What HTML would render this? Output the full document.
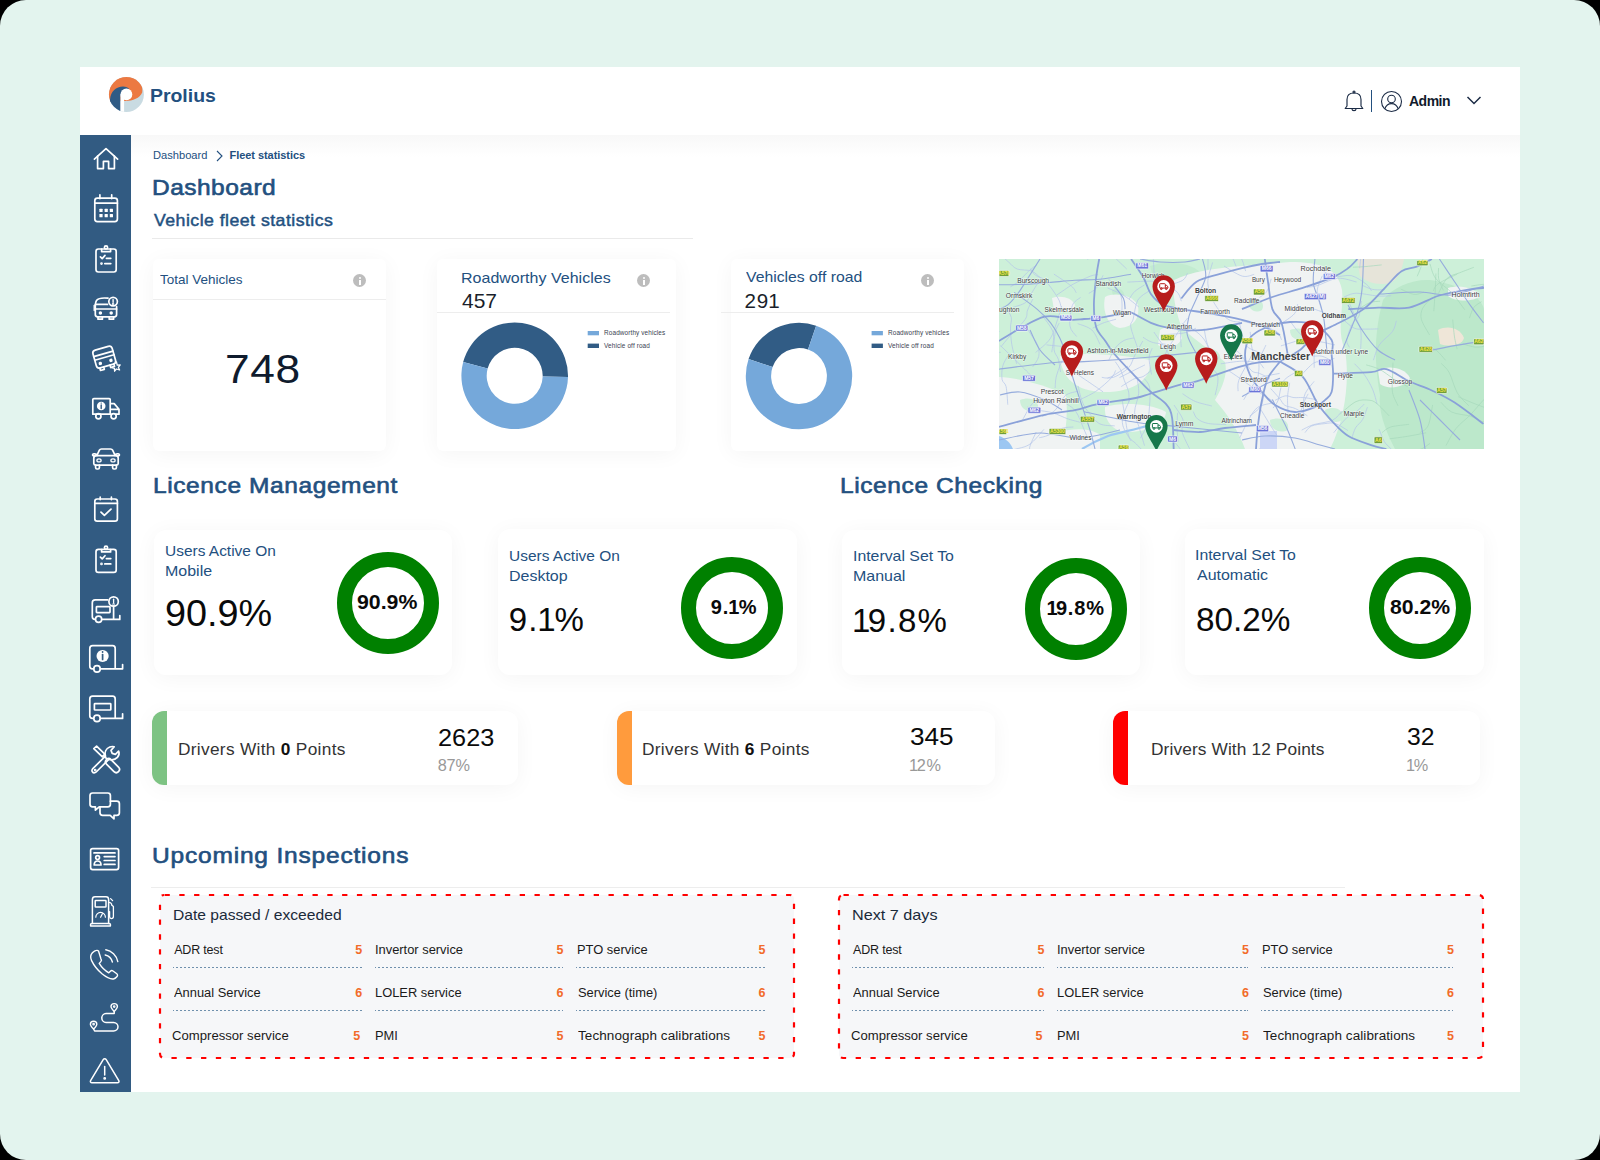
<!DOCTYPE html>
<html><head><meta charset="utf-8">
<style>
*{margin:0;padding:0;box-sizing:border-box}
html,body{width:1600px;height:1160px;overflow:hidden;background:#000;font-family:"Liberation Sans",sans-serif}
.bg{position:absolute;left:0;top:0;width:1600px;height:1160px;background:#E3F4EE;border-radius:26px}
.abs{position:absolute}
.panel{position:absolute;left:80px;top:67px;width:1440px;height:1025px;background:#fff}
.header{position:absolute;left:80px;top:67px;width:1440px;height:68px;background:#fff}
.shade{position:absolute;left:131px;top:135px;width:1389px;height:22px;background:linear-gradient(#f8f8f8,#fff)}
.sidebar{position:absolute;left:80px;top:135px;width:51px;height:957px;background:#325B82}
.t{position:absolute;white-space:nowrap;line-height:1}
.card{position:absolute;background:#fff;border-radius:10px;box-shadow:0 3px 22px rgba(0,0,0,0.045)}
.ttl{color:#23507F;font-weight:bold}
.info{position:absolute;width:13px;height:13px;border-radius:50%;background:#BDBDBD}
.info:before{content:"";position:absolute;left:5.5px;top:2.5px;width:2px;height:2px;background:#fff;border-radius:1px}
.info:after{content:"";position:absolute;left:5.5px;top:5.5px;width:2px;height:5px;background:#fff}
.lt{font-size:14px;line-height:20px;color:#23507F}
.lv{font-size:34px;color:#0A0A0A}
.ring{position:absolute;width:102px;height:102px;margin:0.5px 0 0 0.5px;border-radius:50%;border:15px solid #008000;display:flex;align-items:center;justify-content:center}
.ring span{font-size:18px;font-weight:bold;color:#0A0A0A;line-height:1}
.drv{border-radius:12px;overflow:hidden}
.drv i{position:absolute;left:0;top:0;width:15px;height:100%}
.dt{font-size:16px;color:#333}
.dt b{color:#111}
.dn{font-size:23px;color:#0A0A0A}
.dp{font-size:15px;color:#999}
.ibox{position:absolute;background:#F5F7FA;border:2px dashed #F21D1D}
.ih{font-size:15px;color:#1B2A3A}
.it{font-size:13px;color:#1A1A1A}
.inum{font-size:13px;color:#F0712B;font-weight:bold}
.dot{position:absolute;height:1.1px;background:repeating-linear-gradient(90deg,#6F90AD 0 2px,transparent 2px 4px);background-position:-1px 0}
</style></head><body>
<div class="bg"></div>
<div class="panel"></div>
<div class="header"></div>
<div class="shade"></div>
<div class="sidebar"></div>

<!-- logo -->
<svg class="abs" style="left:105px;top:74px" width="43" height="41" viewBox="105 74 43 41">
<defs><clipPath id="lc"><circle cx="126.4" cy="94.5" r="17.5"/></clipPath></defs>
<g clip-path="url(#lc)">
<rect x="105" y="74" width="43" height="41" fill="#C9DBE2"/>
<path d="M124 101 C132 101.4 139.6 98.6 142.2 92.6 C142.4 91 142.4 89 142 87 C140 80 133.5 76.5 126.4 76.5 C116 76.5 108.6 84 108.6 94.5 L109.5 101.5 Z" fill="#EC7942"/>
<path d="M110.1 99 C110.6 91.6 116.2 86.4 123 86.4 C125.4 86.4 127.4 87.2 129 88.6 L120.5 96 V112.5 L108 112.5 Z" fill="#2F5B85"/>
<circle cx="126.4" cy="94.4" r="5.9" fill="#fff"/>
<rect x="120.5" y="94.4" width="3.6" height="19" fill="#fff"/>
</g>
</svg>
<!-- breadcrumb -->
<svg class="abs" style="left:215px;top:150px" width="9" height="12" viewBox="0 0 9 12" fill="none" stroke="#23507F" stroke-width="1.1"><path d="M2 1 L7 6 L2 11"/></svg>
<div class="abs" style="left:152px;top:237.6px;width:541px;height:1.4px;background:#EAEAEA"></div>
<!-- header right -->
<svg class="abs" style="left:1343px;top:89px" width="22" height="24" viewBox="0 0 22 24" fill="none" stroke="#1B2B45" stroke-width="1.15">
  <path d="M4 17 V10.5 C4 6.5 6.8 4 11 4 C15.2 4 18 6.5 18 10.5 V17 L19.8 19.5 H2.2 Z" stroke-linejoin="round"/>
  <path d="M9 20 C9 22.2 13 22.2 13 20"/>
  <circle cx="11" cy="3" r="1"/>
</svg>
<div class="abs" style="left:1370.8px;top:90px;width:1.2px;height:22px;background:#23507F"></div>
<svg class="abs" style="left:1380px;top:90px" width="23" height="23" viewBox="0 0 23 23" fill="none" stroke="#1B2B45" stroke-width="1.1">
  <circle cx="11.5" cy="11.5" r="10"/>
  <circle cx="11.5" cy="9" r="3.8"/>
  <path d="M4.8 18.8 C6 15.2 8.5 13.6 11.5 13.6 C14.5 13.6 17 15.2 18.2 18.8"/>
</svg>
<svg class="abs" style="left:1466px;top:95px" width="16" height="11" viewBox="0 0 16 11" fill="none" stroke="#1B2B45" stroke-width="1.5">
  <path d="M1.5 2 L8 8.5 L14.5 2"/>
</svg>

<!-- cards row -->
<div class="card" style="left:153px;top:259px;width:233px;height:192px;border-radius:6px"></div>
<div class="abs" style="left:153px;top:299px;width:233px;height:1px;background:#EDEDED"></div>
<div class="info" style="left:353px;top:274px"></div>

<div class="card" style="left:437px;top:259px;width:239px;height:192px;border-radius:6px"></div>
<div class="abs" style="left:437px;top:312px;width:233px;height:1px;background:#EDEDED"></div>
<div class="info" style="left:637px;top:274px"></div>

<div class="card" style="left:731px;top:259px;width:233px;height:192px;border-radius:6px"></div>
<div class="abs" style="left:721px;top:312px;width:233px;height:1px;background:#EDEDED"></div>
<div class="info" style="left:921px;top:274px"></div>

<!-- section titles -->

<!-- licence cards -->
<div class="card" style="left:154px;top:530px;width:298px;height:145px;border-radius:12px"></div>
<div class="ring" style="left:336px;top:551px"></div>

<div class="card" style="left:498px;top:529px;width:299px;height:146px;border-radius:12px"></div>
<div class="ring" style="left:680px;top:556px"></div>

<div class="card" style="left:842px;top:530px;width:298px;height:145px;border-radius:12px"></div>
<div class="ring" style="left:1024px;top:557px"></div>

<div class="card" style="left:1185px;top:529px;width:299px;height:146px;border-radius:12px"></div>
<div class="ring" style="left:1368px;top:556px"></div>

<!-- drivers -->
<div class="card drv" style="left:152px;top:711px;width:366px;height:74px"><i style="background:#7DC383"></i></div>

<div class="card drv" style="left:617px;top:711px;width:378px;height:74px"><i style="background:#FF9B3D"></i></div>

<div class="card drv" style="left:1113px;top:711px;width:367px;height:74px"><i style="background:#FF0000"></i></div>

<!-- inspections -->
<div class="abs" style="left:151px;top:887px;width:1194px;height:1px;background:#EDEDED"></div>
<svg class="abs" style="left:156px;top:891px" width="641" height="170" viewBox="156 891 641 170"><rect x="160" y="895" width="634" height="163" rx="4" fill="#F6F7F9" stroke="#FF0000" stroke-width="2.2" stroke-dasharray="5.3 9.5" stroke-dashoffset="-0.5"/></svg>
<div class="dot" style="left:173px;top:967px;width:189px"></div>
<div class="dot" style="left:375px;top:967px;width:188px"></div>
<div class="dot" style="left:576px;top:967px;width:189px"></div>
<div class="dot" style="left:173px;top:1010px;width:189px"></div>
<div class="dot" style="left:375px;top:1010px;width:188px"></div>
<div class="dot" style="left:576px;top:1010px;width:189px"></div>
<svg class="abs" style="left:835px;top:891px" width="651" height="170" viewBox="835 891 651 170"><rect x="839" y="895" width="644" height="163" rx="4" fill="#F6F7F9" stroke="#FF0000" stroke-width="2.2" stroke-dasharray="5.3 9.5" stroke-dashoffset="-0.5"/></svg>
<div class="dot" style="left:852px;top:967px;width:192px"></div>
<div class="dot" style="left:1057px;top:967px;width:191px"></div>
<div class="dot" style="left:1261px;top:967px;width:192px"></div>
<div class="dot" style="left:852px;top:1010px;width:192px"></div>
<div class="dot" style="left:1057px;top:1010px;width:191px"></div>
<div class="dot" style="left:1261px;top:1010px;width:192px"></div>
<div class="t" style="left:150.2px;top:86.0px;font-size:19px;letter-spacing:-0.00px;color:#23507F;transform:scaleX(1.022);transform-origin:0 0;font-weight:bold">Prolius</div>
<div class="t" style="left:152.8px;top:149.8px;font-size:11px;letter-spacing:0.00px;color:#23507F;transform:scaleX(1.012);transform-origin:0 0">Dashboard</div>
<div class="t" style="left:229.6px;top:149.8px;font-size:11px;letter-spacing:-0.06px;color:#23507F;font-weight:bold">Fleet statistics</div>
<div class="t" style="left:152.4px;top:175.5px;font-size:22.7px;letter-spacing:0.44px;color:#23507F;transform:scaleX(1.080);transform-origin:0 0;-webkit-text-stroke:0.64px #23507F">Dashboard</div>
<div class="t" style="left:153.5px;top:212.1px;font-size:16.4px;letter-spacing:0.43px;color:#23507F;transform:scaleX(1.080);transform-origin:0 0;-webkit-text-stroke:0.46px #23507F">Vehicle fleet statistics</div>
<div class="t" style="left:1409.0px;top:93.5px;font-size:14px;letter-spacing:-0.50px;color:#111A2C;font-weight:bold">Admin</div>
<div class="t" style="left:160.0px;top:272.9px;font-size:13px;letter-spacing:0.00px;color:#23507F;transform:scaleX(1.038);transform-origin:0 0">Total Vehicles</div>
<div class="t" style="left:224.6px;top:348.5px;font-size:41px;letter-spacing:0.62px;color:#0F1B2D;transform:scaleX(1.080);transform-origin:0 0">748</div>
<div class="t" style="left:460.7px;top:270.8px;font-size:14.8px;letter-spacing:0.02px;color:#23507F;transform:scaleX(1.080);transform-origin:0 0">Roadworthy Vehicles</div>
<div class="t" style="left:462.2px;top:290.6px;font-size:20.6px;letter-spacing:0.00px;color:#1A1F2B;transform:scaleX(1.018);transform-origin:0 0">457</div>
<div class="t" style="left:745.6px;top:270.2px;font-size:14.8px;letter-spacing:0.00px;color:#23507F;transform:scaleX(1.065);transform-origin:0 0">Vehicles off road</div>
<div class="t" style="left:744.6px;top:290.7px;font-size:20.6px;letter-spacing:0.82px;color:#1A1F2B">29<span style="margin-left:-0.99px;margin-right:-1.48px">1</span></div>
<div class="t" style="left:152.9px;top:474.2px;font-size:22.7px;letter-spacing:0.55px;color:#23507F;transform:scaleX(1.080);transform-origin:0 0;-webkit-text-stroke:0.64px #23507F">Licence Management</div>
<div class="t" style="left:840.2px;top:474.2px;font-size:22.7px;letter-spacing:0.55px;color:#23507F;transform:scaleX(1.080);transform-origin:0 0;-webkit-text-stroke:0.64px #23507F">Licence Checking</div>
<div class="t" style="left:165.3px;top:544.2px;font-size:14.8px;letter-spacing:0.00px;color:#23507F;transform:scaleX(1.045);transform-origin:0 0">Users Active On</div>
<div class="t" style="left:165.2px;top:564.1px;font-size:14.8px;letter-spacing:0.00px;color:#23507F;transform:scaleX(1.080);transform-origin:0 0">Mobile</div>
<div class="t" style="left:164.7px;top:595.4px;font-size:37.5px;letter-spacing:0.00px;color:#0A0A0A;transform:scaleX(1.008);transform-origin:0 0">90.9%</div>
<div class="t" style="left:509.3px;top:548.8px;font-size:14.8px;letter-spacing:0.00px;color:#23507F;transform:scaleX(1.045);transform-origin:0 0">Users Active On</div>
<div class="t" style="left:509.2px;top:568.9px;font-size:14.8px;letter-spacing:0.00px;color:#23507F;transform:scaleX(1.080);transform-origin:0 0">Desktop</div>
<div class="t" style="left:508.7px;top:602.9px;font-size:33px;letter-spacing:1.32px;color:#0A0A0A">9.<span style="margin-left:-1.58px;margin-right:-2.38px">1</span>%</div>
<div class="t" style="left:852.9px;top:549.1px;font-size:14.8px;letter-spacing:0.00px;color:#23507F;transform:scaleX(1.070);transform-origin:0 0">Interval Set To</div>
<div class="t" style="left:852.9px;top:569.1px;font-size:14.8px;letter-spacing:0.00px;color:#23507F;transform:scaleX(1.080);transform-origin:0 0">Manual</div>
<div class="t" style="left:852.0px;top:603.5px;font-size:33px;letter-spacing:1.32px;color:#0A0A0A"><span style="margin-right:-3.96px">1</span>9.8%</div>
<div class="t" style="left:1195.4px;top:547.7px;font-size:14.8px;letter-spacing:0.00px;color:#23507F;transform:scaleX(1.070);transform-origin:0 0">Interval Set To</div>
<div class="t" style="left:1196.5px;top:567.7px;font-size:14.8px;letter-spacing:0.00px;color:#23507F;transform:scaleX(1.080);transform-origin:0 0">Automatic</div>
<div class="t" style="left:1195.5px;top:602.8px;font-size:33px;letter-spacing:0.00px;color:#0A0A0A;transform:scaleX(1.009);transform-origin:0 0">80.2%</div>
<div class="t" style="left:357.3px;top:591.9px;font-size:20px;letter-spacing:0.00px;color:#0A0A0A;transform:scaleX(1.063);transform-origin:0 0;font-weight:bold">90.9%</div>
<div class="t" style="left:710.8px;top:597.0px;font-size:20px;letter-spacing:0.80px;color:#0A0A0A;font-weight:bold">9.<span style="margin-left:-0.96px;margin-right:-1.44px">1</span>%</div>
<div class="t" style="left:1046.4px;top:597.6px;font-size:20px;letter-spacing:0.80px;color:#0A0A0A;font-weight:bold"><span style="margin-right:-2.40px">1</span>9.8%</div>
<div class="t" style="left:1389.5px;top:597.0px;font-size:20px;letter-spacing:0.00px;color:#0A0A0A;transform:scaleX(1.059);transform-origin:0 0;font-weight:bold">80.2%</div>
<div class="t" style="left:438.2px;top:725.6px;font-size:24.5px;letter-spacing:0.00px;color:#0A0A0A;transform:scaleX(1.033);transform-origin:0 0">2623</div>
<div class="t" style="left:437.7px;top:757.2px;font-size:16.3px;letter-spacing:-0.15px;color:#999999">87%</div>
<div class="t" style="left:910.0px;top:725.2px;font-size:24.5px;letter-spacing:0.00px;color:#0A0A0A;transform:scaleX(1.066);transform-origin:0 0">345</div>
<div class="t" style="left:909.0px;top:757.2px;font-size:16.3px;letter-spacing:0.65px;color:#999999"><span style="margin-right:-1.96px">1</span>2%</div>
<div class="t" style="left:1407.2px;top:725.2px;font-size:24.5px;letter-spacing:0.00px;color:#0A0A0A;transform:scaleX(1.010);transform-origin:0 0">32</div>
<div class="t" style="left:1405.9px;top:757.2px;font-size:16.3px;letter-spacing:0.65px;color:#999999"><span style="margin-right:-1.96px">1</span>%</div>
<div class="t" style="left:152.0px;top:844.2px;font-size:22.7px;letter-spacing:0.75px;color:#23507F;transform:scaleX(1.080);transform-origin:0 0;-webkit-text-stroke:0.64px #23507F">Upcoming Inspections</div>
<div class="t" style="left:172.7px;top:907.3px;font-size:15px;letter-spacing:-0.00px;color:#1B2A3A;transform:scaleX(1.042);transform-origin:0 0">Date passed / exceeded</div>
<div class="t" style="left:851.6px;top:907.3px;font-size:15px;letter-spacing:0.00px;color:#1B2A3A;transform:scaleX(1.080);transform-origin:0 0">Next 7 days</div>
<div class="t" style="left:174.2px;top:943.5px;font-size:12.5px;letter-spacing:-0.19px;color:#1A1A1A">ADR test</div>
<div class="t" style="left:355.3px;top:943.5px;font-size:12.5px;letter-spacing:0.38px;color:#F26B2A;font-weight:bold">5</div>
<div class="t" style="left:374.9px;top:943.5px;font-size:12.5px;letter-spacing:0.00px;color:#1A1A1A;transform:scaleX(1.030);transform-origin:0 0">Invertor service</div>
<div class="t" style="left:556.5px;top:943.5px;font-size:12.5px;letter-spacing:0.38px;color:#F26B2A;font-weight:bold">5</div>
<div class="t" style="left:576.7px;top:943.5px;font-size:12.5px;letter-spacing:0.00px;color:#1A1A1A;transform:scaleX(1.030);transform-origin:0 0">PTO service</div>
<div class="t" style="left:758.4px;top:943.5px;font-size:12.5px;letter-spacing:0.38px;color:#F26B2A;font-weight:bold">5</div>
<div class="t" style="left:174.2px;top:986.5px;font-size:12.5px;letter-spacing:0.00px;color:#1A1A1A;transform:scaleX(1.030);transform-origin:0 0">Annual Service</div>
<div class="t" style="left:355.3px;top:986.5px;font-size:12.5px;letter-spacing:0.38px;color:#F26B2A;font-weight:bold">6</div>
<div class="t" style="left:374.9px;top:986.5px;font-size:12.5px;letter-spacing:0.00px;color:#1A1A1A;transform:scaleX(1.030);transform-origin:0 0">LOLER service</div>
<div class="t" style="left:556.5px;top:986.5px;font-size:12.5px;letter-spacing:0.38px;color:#F26B2A;font-weight:bold">6</div>
<div class="t" style="left:577.7px;top:986.5px;font-size:12.5px;letter-spacing:0.00px;color:#1A1A1A;transform:scaleX(1.030);transform-origin:0 0">Service (time)</div>
<div class="t" style="left:758.4px;top:986.5px;font-size:12.5px;letter-spacing:0.38px;color:#F26B2A;font-weight:bold">6</div>
<div class="t" style="left:172.2px;top:1029.5px;font-size:12.5px;letter-spacing:0.00px;color:#1A1A1A;transform:scaleX(1.050);transform-origin:0 0">Compressor service</div>
<div class="t" style="left:353.3px;top:1029.5px;font-size:12.5px;letter-spacing:0.38px;color:#F26B2A;font-weight:bold">5</div>
<div class="t" style="left:374.9px;top:1029.5px;font-size:12.5px;letter-spacing:0.00px;color:#1A1A1A;transform:scaleX(1.030);transform-origin:0 0">PMI</div>
<div class="t" style="left:556.5px;top:1029.5px;font-size:12.5px;letter-spacing:0.38px;color:#F26B2A;font-weight:bold">5</div>
<div class="t" style="left:577.7px;top:1029.5px;font-size:12.5px;letter-spacing:0.08px;color:#1A1A1A;transform:scaleX(1.080);transform-origin:0 0">Technograph calibrations</div>
<div class="t" style="left:758.4px;top:1029.5px;font-size:12.5px;letter-spacing:0.38px;color:#F26B2A;font-weight:bold">5</div>
<div class="t" style="left:853.1px;top:943.5px;font-size:12.5px;letter-spacing:-0.19px;color:#1A1A1A">ADR test</div>
<div class="t" style="left:1037.6px;top:943.5px;font-size:12.5px;letter-spacing:0.38px;color:#F26B2A;font-weight:bold">5</div>
<div class="t" style="left:1057.0px;top:943.5px;font-size:12.5px;letter-spacing:0.00px;color:#1A1A1A;transform:scaleX(1.030);transform-origin:0 0">Invertor service</div>
<div class="t" style="left:1242.0px;top:943.5px;font-size:12.5px;letter-spacing:0.38px;color:#F26B2A;font-weight:bold">5</div>
<div class="t" style="left:1261.8px;top:943.5px;font-size:12.5px;letter-spacing:0.00px;color:#1A1A1A;transform:scaleX(1.030);transform-origin:0 0">PTO service</div>
<div class="t" style="left:1446.9px;top:943.5px;font-size:12.5px;letter-spacing:0.38px;color:#F26B2A;font-weight:bold">5</div>
<div class="t" style="left:853.1px;top:986.5px;font-size:12.5px;letter-spacing:0.00px;color:#1A1A1A;transform:scaleX(1.030);transform-origin:0 0">Annual Service</div>
<div class="t" style="left:1037.6px;top:986.5px;font-size:12.5px;letter-spacing:0.38px;color:#F26B2A;font-weight:bold">6</div>
<div class="t" style="left:1057.0px;top:986.5px;font-size:12.5px;letter-spacing:0.00px;color:#1A1A1A;transform:scaleX(1.030);transform-origin:0 0">LOLER service</div>
<div class="t" style="left:1242.0px;top:986.5px;font-size:12.5px;letter-spacing:0.38px;color:#F26B2A;font-weight:bold">6</div>
<div class="t" style="left:1262.8px;top:986.5px;font-size:12.5px;letter-spacing:0.00px;color:#1A1A1A;transform:scaleX(1.030);transform-origin:0 0">Service (time)</div>
<div class="t" style="left:1446.9px;top:986.5px;font-size:12.5px;letter-spacing:0.38px;color:#F26B2A;font-weight:bold">6</div>
<div class="t" style="left:851.1px;top:1029.5px;font-size:12.5px;letter-spacing:0.00px;color:#1A1A1A;transform:scaleX(1.050);transform-origin:0 0">Compressor service</div>
<div class="t" style="left:1035.6px;top:1029.5px;font-size:12.5px;letter-spacing:0.38px;color:#F26B2A;font-weight:bold">5</div>
<div class="t" style="left:1057.0px;top:1029.5px;font-size:12.5px;letter-spacing:0.00px;color:#1A1A1A;transform:scaleX(1.030);transform-origin:0 0">PMI</div>
<div class="t" style="left:1242.0px;top:1029.5px;font-size:12.5px;letter-spacing:0.38px;color:#F26B2A;font-weight:bold">5</div>
<div class="t" style="left:1262.8px;top:1029.5px;font-size:12.5px;letter-spacing:0.08px;color:#1A1A1A;transform:scaleX(1.080);transform-origin:0 0">Technograph calibrations</div>
<div class="t" style="left:1446.9px;top:1029.5px;font-size:12.5px;letter-spacing:0.38px;color:#F26B2A;font-weight:bold">5</div>
<div class="t dt" style="left:177.8px;top:741.5px;font-size:16px;letter-spacing:0.28px;transform:scaleX(1.08);transform-origin:0 0">Drivers With <b>0</b> Points</div>
<div class="t dt" style="left:642.2px;top:741.5px;font-size:16px;letter-spacing:0.28px;transform:scaleX(1.08);transform-origin:0 0">Drivers With <b>6</b> Points</div>
<div class="t dt" style="left:1150.5px;top:741.5px;font-size:16px;letter-spacing:0.11px;transform:scaleX(1.08);transform-origin:0 0">Drivers With 12 Points</div>
<svg class="abs" style="left:80px;top:135px" width="51" height="957" viewBox="80 135 51 957" fill="none" stroke="#fff" stroke-width="1.7" stroke-linecap="round" stroke-linejoin="round">
<!-- 1 home -->
<path d="M94.4 159.2 L106 148.6 L117.6 159.2"/>
<path d="M97.6 156 V168.6 H103.4 V161.4 H108.6 V168.6 H114.4 V156"/>
<!-- 2 calendar -->
<rect x="94.8" y="198.2" width="22.6" height="23.4" rx="2.6"/>
<path d="M94.8 203.2 H117.4 M99.9 194.8 V198.6 M111.7 194.8 V198.6"/>
<g fill="#fff" stroke="none"><rect x="99.4" y="208.8" width="3.2" height="3.2" rx=".5"/><rect x="104.6" y="208.8" width="3.2" height="3.2" rx=".5"/><rect x="109.8" y="208.8" width="3.2" height="3.2" rx=".5"/><rect x="99.4" y="214.1" width="3.2" height="3.2" rx=".5"/><rect x="104.6" y="214.1" width="3.2" height="3.2" rx=".5"/><rect x="109.8" y="214.1" width="3.2" height="3.2" rx=".5"/></g>
<!-- 3 clipboard -->
<g id="clip">
<rect x="96" y="249" width="20.2" height="23" rx="2.4"/>
<path d="M101.6 249.2 V251.6 H110.6 V249.2"/>
<circle cx="106" cy="247.4" r="1.6"/>
<path d="M100.4 256.8 L102.2 258.6 L105 255.4 M106.4 258.3 H110.8 M104.8 263.6 H110.8"/>
<circle cx="101.5" cy="263.6" r=".5" fill="#fff"/>
</g>
<use href="#clip" transform="translate(0 300.3)"/>
<!-- 4 bus alert -->
<g>
<path d="M108 298.2 C102 297.6 98 298.6 96.5 300.5 C95.4 302 95.3 304 95.3 306 V314.5 C95.3 316 96.2 316.8 97.6 316.8 H114.4 C115.8 316.8 116.6 316 116.6 314.5 V306.5"/>
<path d="M95.3 304.4 H107.5 M95.3 309 H116.6"/>
<path d="M98 316.8 V319.2 H102.4 V316.8 M109.2 316.8 V319.2 H113.6 V316.8"/>
<circle cx="100.4" cy="313" r=".9" fill="#fff"/><circle cx="111.2" cy="313" r=".9" fill="#fff"/>
<circle cx="113.1" cy="301.6" r="4.3"/>
<path d="M113.1 299.6 V302.2" stroke-width="1.4"/><circle cx="113.1" cy="304" r=".35" fill="#fff"/>
<path d="M94.2 305.5 V310.5" stroke-width="1.4"/>
</g>
<!-- 5 bus crash -->
<g transform="rotate(-16 104 358)">
<rect x="94.5" y="348" width="20" height="18.5" rx="3.2"/>
<path d="M94.5 353.8 H114.5 M94.5 357.6 H114.5"/>
<path d="M97.2 366.5 V369 H101.2 V366.5 M107.8 366.5 V369 H111.8 V366.5"/>
<circle cx="99" cy="362.2" r=".9" fill="#fff"/><circle cx="110" cy="362.2" r=".9" fill="#fff"/>
</g>
<path d="M116.5 362 L117.2 365.2 L120.2 364.8 L118.4 367.4 L119.6 370 L116.4 369 L114.6 371.2 L114.4 368.4 L111.6 367.6" stroke-width="1.3"/>
<!-- 6 truck info -->
<path d="M110.2 414.2 H92.8 V399.6 C92.8 398.9 93.2 398.6 93.9 398.6 H109.2 C109.9 398.6 110.2 399 110.2 399.6 V414.2 M110.2 403.6 H114.2 L119 409.2 V414.2 H116.2 M110.2 409.4 H119 M101.2 414.2 H110.8"/>
<circle cx="98.4" cy="416.3" r="2.6"/><circle cx="113.6" cy="416.3" r="2.6"/>
<circle cx="101.2" cy="406" r="4.3" fill="#fff" stroke="none"/>
<path d="M101.2 405 V408.6" stroke="#325B82" stroke-width="1.4"/><circle cx="101.2" cy="403.1" r=".7" fill="#325B82" stroke="none"/>
<!-- 7 car -->
<path d="M96.8 455.6 L99.4 450.2 C99.8 449.4 100.4 449 101.4 449 H110.6 C111.6 449 112.2 449.4 112.6 450.2 L115.2 455.6"/>
<path d="M95.4 465.2 C94.3 465.2 93.8 464.6 93.8 463.6 V458 C93.8 456.6 95 455.6 96.4 455.6 H115.6 C117 455.6 118.2 456.6 118.2 458 V463.6 C118.2 464.6 117.7 465.2 116.6 465.2 Z"/>
<path d="M94.6 456 C93.4 456 92.6 455.6 92.6 454.8 C92.6 454 93.4 453.6 94.6 453.8 L96.4 454.4 M117.4 456 C118.6 456 119.4 455.6 119.4 454.8 C119.4 454 118.6 453.6 117.4 453.8 L115.6 454.4"/>
<path d="M95.6 465.2 V467.6 C95.6 468.5 96.1 469 97 469 H98 C98.9 469 99.4 468.5 99.4 467.6 V465.2 M112.6 465.2 V467.6 C112.6 468.5 113.1 469 114 469 H115 C115.9 469 116.4 468.5 116.4 467.6 V465.2"/>
<ellipse cx="99" cy="460.4" rx="2.1" ry="1.5" stroke-width="1.3"/><ellipse cx="113" cy="460.4" rx="2.1" ry="1.5" stroke-width="1.3"/>
<!-- 8 calendar check -->
<rect x="94.8" y="499" width="22.6" height="22.2" rx="2.4"/>
<path d="M94.8 503.3 H117.4 M100.2 497.2 V499.6 M111.4 497.2 V499.6"/>
<path d="M101 512.2 L104.4 515.4 L111 509.2"/>
<!-- 10 trailer alert -->
<path d="M107.6 599.9 H95.2 C93.3 599.9 92.3 600.9 92.3 602.8 V616.8 C92.3 618.6 93.2 619.4 95 619.4 M102 619.4 H119.8 V615.6 M113.6 606.2 V619.4"/>
<rect x="96.4" y="606.6" width="13.6" height="6" rx=".6"/>
<circle cx="98.6" cy="619.2" r="3.1"/>
<circle cx="113.6" cy="601.5" r="4.7"/>
<path d="M113.6 599.2 V602.4" stroke-width="1.3"/><circle cx="113.6" cy="604.2" r=".3" fill="#fff"/>
<!-- 11 trailer info -->
<path d="M93.4 668.8 H92.4 C90.6 668.8 89.8 668 89.8 666.2 V648.4 C89.8 646.6 90.8 645.6 92.6 645.6 H112.6 C114.4 645.6 115.2 646.6 115.2 648.4 V668.8 M100.6 668.8 H122.6 V664.6"/>
<circle cx="97" cy="668.9" r="3.2"/>
<circle cx="102.6" cy="656" r="6.1" fill="#fff" stroke="none"/>
<path d="M102.6 654.6 V659.4" stroke="#325B82" stroke-width="1.7"/><circle cx="102.6" cy="652" r=".9" fill="#325B82" stroke="none"/>
<!-- 12 trailer -->
<path d="M93.4 718.4 H92.4 C90.6 718.4 89.8 717.6 89.8 715.8 V699 C89.8 697.2 90.8 696.2 92.6 696.2 H112.6 C114.4 696.2 115.2 697.2 115.2 699 V718.4 M100.6 718.4 H122.6 V713.8"/>
<rect x="94.4" y="703.6" width="16.4" height="6.4" rx=".6"/>
<circle cx="97" cy="718.4" r="3.2"/>
<!-- 13 tools -->
<path d="M93.8 748.6 L96.6 746.2 L104.8 754.2 L102.4 756.8 Z"/>
<path d="M103.6 755.6 L106.6 758.6"/>
<rect x="104" y="762.4" width="17" height="6.4" rx="3.2" transform="rotate(45 112.5 765.6)"/>
<path d="M108.8 759.4 L96.2 772 C95 773.2 93.2 773.2 92.6 772 C91.6 771.2 91.8 769.8 92.8 768.6 L105.4 756.2"/>
<path d="M105.4 756.2 C104.4 752.6 105.8 748.6 109.8 747 C111.4 746.4 113 746.4 114.2 746.8 L111 750.4 L112.2 753.4 L115.4 754.4 L118.6 751.2 C119.4 753 119 755.6 117.4 757.4 C115.4 759.6 112.2 760.2 108.8 759.4"/>
<circle cx="95.2" cy="770.2" r=".5" fill="#fff"/>
<!-- 14 chat -->
<path d="M92.6 793 H107.8 C109.4 793 110.4 794 110.4 795.6 V804.2 C110.4 805.8 109.4 806.8 107.8 806.8 H99.2 L95.4 810.2 V806.8 H92.6 C91 806.8 90 805.8 90 804.2 V795.6 C90 794 91 793 92.6 793 Z"/>
<path d="M110.4 801.2 H116.8 C118.4 801.2 119.4 802.2 119.4 803.8 V812.8 C119.4 814.4 118.4 815.4 116.8 815.4 H114 V818.8 L110.2 815.4 H102.6 C101 815.4 100 814.4 100 812.8 V806.8"/>
<!-- 15 id card -->
<rect x="90.6" y="848.6" width="28" height="21" rx="2"/>
<path d="M94 852.9 H115 M104.2 856.6 H115 M104.2 860.5 H115 M104.2 864.4 H115"/>
<circle cx="97.6" cy="857.6" r="1.9"/>
<path d="M94.2 865 C94.2 862.4 95.8 861 97.6 861 C99.4 861 101 862.4 101 865 Z"/>
<!-- 16 fuel -->
<path d="M92.4 923.6 V899.4 C92.4 897.8 93.4 896.8 95 896.8 H106 C107.6 896.8 108.6 897.8 108.6 899.4 V923.6" stroke-width="1.5"/>
<rect x="95.2" y="900.4" width="10.8" height="6.6" rx=".6" stroke-width="1.5"/>
<path d="M90.6 926 V924.6 C90.6 923.8 91 923.4 91.8 923.4 H109.2 C110 923.4 110.4 923.8 110.4 924.6 V926 Z" stroke-width="1.5"/>
<path d="M95.8 917.2 A4.8 4.8 0 1 1 105.4 917.2 M100.6 917.2 L102.4 913.8" stroke-width="1.2"/>
<path d="M108.6 902.4 C110.6 902.4 111.2 903 111.6 904 V905 L113.4 906.4 V916.6 C113.4 917.8 112.6 918.6 111.4 918.6 C110.2 918.6 109.6 917.8 109.6 916.8 V911.6 H108.6 M110.6 898.6 L112.6 900.6" stroke-width="1.3"/>
<!-- 17 phone -->
<path d="M96.4 950.4 C95 950.6 93.6 951.6 92.4 952.8 C90.4 955 90.2 957.8 91.6 960.6 C93.6 964.8 97.6 970 102 973.8 C106.4 977.4 110.6 979.4 113.4 979 C114.6 978.8 115.8 978 116.8 976.8 C117.8 975.6 117.8 974.6 116.8 973.8 L113 971 C112.2 970.4 111.2 970.4 110.4 971.2 L108.8 972.8 C105.2 970.8 101.4 967 99.2 963.4 L100.8 961.6 C101.6 960.8 101.6 959.8 101 959 L98.6 951.2 C98.2 950.6 97.4 950.2 96.4 950.4 Z" stroke-width="1.4"/>
<path d="M105.2 955 C108.8 955.8 111.4 958.4 112.4 962 M105.8 949.8 C111.6 950.8 116.6 955.6 117.8 961.6" stroke-width="1.4"/>
<!-- 18 route -->
<path d="M114.2 1011.4 V1013.6 H106 C103.6 1013.6 101.8 1015.6 101.8 1018 C101.8 1020.4 103.6 1022.4 106 1022.4 H113.6 C116 1022.4 118 1024.4 118 1026.8 C118 1029.2 116 1031 113.6 1031 H94.6 L93.6 1029" stroke-width="1.5"/>
<path d="M114.2 1011.4 C112.6 1009.8 111 1008 111 1006.6 C111 1004.8 112.4 1003.6 114.2 1003.6 C116 1003.6 117.4 1004.8 117.4 1006.6 C117.4 1008 115.8 1009.8 114.2 1011.4 Z" stroke-width="1.4"/>
<path d="M93.6 1029 C92 1027.4 90.4 1025.8 90.4 1024.2 C90.4 1022.4 91.8 1021.2 93.6 1021.2 C95.4 1021.2 96.8 1022.4 96.8 1024.2 C96.8 1025.8 95.2 1027.4 93.6 1029 Z" stroke-width="1.4"/>
<circle cx="114.2" cy="1006.6" r=".5" fill="#fff"/><circle cx="93.6" cy="1024.2" r=".5" fill="#fff"/>
<!-- 19 warning -->
<path d="M103.2 1059.6 C103.9 1058.4 105.5 1058.4 106.2 1059.6 L118.8 1080.6 C119.4 1081.8 118.8 1082.8 117.4 1082.8 H92 C90.6 1082.8 90 1081.8 90.6 1080.6 Z" stroke-width="1.5"/>
<path d="M104.7 1066.4 V1075" stroke-width="1.5"/><circle cx="104.7" cy="1078.4" r=".6" fill="#fff"/>
</svg>
<svg class="abs" style="left:0;top:0" width="1600" height="460" viewBox="0 0 1600 460">
<path d="M463.19 362.09 A53.3 53.3 0 0 1 567.99 376.92 L542.69 376.39 A28 28 0 0 0 487.64 368.60 Z" fill="#315C85"/>
<path d="M567.99 376.92 A53.3 53.3 0 1 1 463.19 362.09 L487.64 368.60 A28 28 0 1 0 542.69 376.39 Z" fill="#75A8DA"/>
<path d="M748.58 359.03 A53.2 53.2 0 0 1 816.14 325.64 L807.99 349.59 A27.9 27.9 0 0 0 772.56 367.10 Z" fill="#315C85"/>
<path d="M816.14 325.64 A53.2 53.2 0 1 1 748.58 359.03 L772.56 367.10 A27.9 27.9 0 1 0 807.99 349.59 Z" fill="#75A8DA"/>
<rect x="587.7" y="331" width="11.3" height="4.3" fill="#75A8DA"/>
<rect x="587.7" y="343.6" width="11.3" height="4.4" fill="#315C85"/>
<text x="604.1" y="335.2" font-size="6.4" fill="#3A4250" font-family="Liberation Sans" letter-spacing="0.12">Roadworthy vehicles</text>
<text x="604.1" y="347.8" font-size="6.4" fill="#3A4250" font-family="Liberation Sans" letter-spacing="0.12">Vehicle off road</text>
<rect x="871.6" y="331" width="11.3" height="4.3" fill="#75A8DA"/>
<rect x="871.6" y="343.6" width="11.3" height="4.4" fill="#315C85"/>
<text x="888" y="335.2" font-size="6.4" fill="#3A4250" font-family="Liberation Sans" letter-spacing="0.12">Roadworthy vehicles</text>
<text x="888" y="347.8" font-size="6.4" fill="#3A4250" font-family="Liberation Sans" letter-spacing="0.12">Vehicle off road</text>
</svg>
<svg class="abs" style="left:999px;top:259px" width="485" height="190" viewBox="999 259 485 190">
<rect x="999" y="259" width="485" height="190" fill="#CDF0D9"/>
<path d="M1383 300 C1395 285 1420 276 1440 282 C1465 287 1484 300 1484 310 V449 H1395 C1385 430 1378 410 1380 395 C1376 370 1372 340 1383 300 Z" fill="#BCE8CB"/>
<path d="M1150 266 C1165 260 1190 262 1200 272 C1195 285 1170 290 1155 284 Z" fill="#C2EBD0"/>
<path d="M1112 290 C1118 286 1126 290 1124 298 C1118 302 1112 298 1112 290 Z" fill="#C2EBD0"/>
<path d="M1357 259 H1404 C1402 270 1398 280 1390 283 C1378 286 1366 282 1360 276 Z" fill="#E6E4D9"/>
<path d="M1438 330 C1448 325 1460 328 1464 338 C1462 346 1448 347 1440 344 Z" fill="#EFE6D8"/>
<path d="M1174 280 C1190 272 1215 268 1242 266 L1290 262 C1320 262 1338 268 1342 290 C1344 310 1336 330 1345 350 C1350 380 1345 420 1330 449 H1245 C1238 430 1228 415 1215 400 C1222 388 1228 375 1225 362 C1210 350 1195 340 1182 328 C1176 312 1172 295 1174 280 Z" fill="#F0F3F3"/>
<path d="M1105 297 C1115 292 1132 295 1138 305 C1140 318 1134 327 1120 328 C1108 326 1102 312 1105 297 Z" fill="#F0F3F3"/>
<path d="M1052 298 C1060 295 1072 297 1075 305 C1073 312 1062 314 1054 310 Z" fill="#F0F3F3"/>
<path d="M1060 356 C1080 352 1120 354 1150 360 C1152 375 1140 390 1110 392 C1085 393 1062 385 1060 356 Z" fill="#F0F3F3"/>
<path d="M999 377 C1020 378 1045 385 1066 395 C1068 415 1066 430 1062 449 H999 Z" fill="#F0F3F3"/>
<path d="M1105 407 C1120 402 1150 403 1166 412 C1165 425 1145 433 1122 432 C1110 428 1104 418 1105 407 Z" fill="#F0F3F3"/>
<path d="M1060 432 C1072 428 1092 428 1100 435 V449 H1058 Z" fill="#F0F3F3"/>
<path d="M1160 330 C1168 325 1180 328 1182 338 C1178 348 1165 350 1158 345 Z" fill="#F0F3F3"/>
<path d="M1378 370 C1390 365 1405 368 1410 378 C1405 388 1388 390 1380 384 Z" fill="#F0F3F3"/>
<path d="M1448 288 C1460 284 1475 288 1480 296 C1474 302 1455 302 1448 296 Z" fill="#F0F3F3"/>
<path d="M1290 330 C1300 326 1310 330 1308 338 C1300 342 1290 340 1290 330 Z" fill="#CDEFD9"/>
<path d="M1325 410 C1335 405 1345 410 1342 420 C1335 425 1325 420 1325 410 Z" fill="#CDEFD9"/>
<path d="M1200 350 C1210 346 1222 350 1220 360 C1210 364 1200 360 1200 350 Z" fill="#CDEFD9"/>
<path d="M1248 300 C1258 296 1266 302 1262 310 C1255 314 1248 310 1248 300 Z" fill="#CDEFD9"/>
<path d="M1020 400 C1030 396 1040 400 1038 410 C1030 414 1020 410 1020 400 Z" fill="#CDEFD9"/>
<path d="M1270 420 C1280 416 1290 420 1288 430 C1280 434 1270 430 1270 420 Z" fill="#CDEFD9"/>
<path d="M999 436 C1005 438 1010 442 1013 449 H999 Z" fill="#9CC7F2"/>
<path d="M1260 431 H1277 V449 H1260 Z" fill="#CCD6F6"/>
<path d="M1082 449 C1090 444 1098 440 1108 436 C1120 432 1135 430 1150 425" stroke="#9CC7F2" stroke-width="2.2" fill="none"/>
<path d="M1156.1 287.7 C1155.8 286.1 1154.9 283.5 1154.5 278.5 C1154.0 273.5 1153.5 261.2 1153.3 257.8" stroke="#B3C4EA" stroke-width="0.7" fill="none"/>
<path d="M1103.1 275.3 C1102.0 277.4 1099.0 284.7 1096.6 287.7 C1094.3 290.7 1090.1 292.5 1088.8 293.4" stroke="#B3C4EA" stroke-width="0.7" fill="none"/>
<path d="M1107.3 378.2 C1108.7 377.9 1112.2 378.2 1115.8 376.4 C1119.4 374.6 1125.6 371.1 1128.8 367.5 C1132.0 363.9 1132.6 359.5 1134.9 355.1 C1137.3 350.7 1141.5 343.5 1142.8 341.1" stroke="#B3C4EA" stroke-width="0.7" fill="none"/>
<path d="M1270.7 388.6 C1272.2 390.2 1277.1 395.6 1279.5 398.4 C1281.9 401.2 1282.3 403.8 1285.0 405.4 C1287.6 407.1 1291.7 406.8 1295.4 408.6 C1299.1 410.3 1305.4 414.6 1307.4 415.8" stroke="#B3C4EA" stroke-width="0.7" fill="none"/>
<path d="M1151.4 370.3 C1150.0 371.3 1145.8 375.2 1143.0 376.6 C1140.1 378.0 1137.7 377.2 1134.1 378.9 C1130.5 380.5 1123.4 385.2 1121.3 386.5" stroke="#B3C4EA" stroke-width="0.7" fill="none"/>
<path d="M1165.6 344.3 C1163.3 343.9 1155.6 343.4 1151.9 342.2 C1148.1 341.0 1144.5 338.1 1143.0 337.3" stroke="#B3C4EA" stroke-width="0.7" fill="none"/>
<path d="M1236.1 266.4 C1234.8 263.4 1231.2 253.3 1228.0 247.9 C1224.8 242.5 1220.2 238.6 1217.0 234.0 C1213.8 229.4 1211.9 225.2 1208.7 220.2 C1205.5 215.2 1199.4 206.6 1197.5 203.9" stroke="#B3C4EA" stroke-width="0.7" fill="none"/>
<path d="M1457.2 349.1 C1456.7 347.1 1455.3 341.9 1454.5 337.0 C1453.8 332.1 1453.0 322.5 1452.7 319.6" stroke="#A6D8BC" stroke-width="0.7" fill="none"/>
<path d="M1215.1 395.2 C1215.6 392.8 1217.9 384.9 1217.9 381.0 C1217.9 377.0 1218.2 375.2 1215.3 371.7 C1212.4 368.2 1203.2 361.8 1200.7 359.9" stroke="#B3C4EA" stroke-width="0.7" fill="none"/>
<path d="M1061.7 306.0 C1061.0 308.3 1059.4 314.3 1057.5 319.7 C1055.6 325.1 1053.9 333.2 1050.2 338.7 C1046.6 344.2 1038.0 350.2 1035.6 352.5" stroke="#B3C4EA" stroke-width="0.7" fill="none"/>
<path d="M1134.0 337.9 C1132.4 338.3 1127.3 338.8 1124.2 340.4 C1121.2 342.0 1118.2 344.2 1115.6 347.6 C1113.0 351.0 1109.7 358.5 1108.6 360.6" stroke="#B3C4EA" stroke-width="0.7" fill="none"/>
<path d="M1284.7 308.9 C1287.5 309.1 1296.9 310.2 1301.2 310.1 C1305.6 310.1 1305.8 307.6 1310.8 308.4 C1315.8 309.2 1327.7 314.0 1331.0 315.2" stroke="#B3C4EA" stroke-width="0.7" fill="none"/>
<path d="M1316.7 399.6 C1314.4 399.2 1307.1 397.9 1303.3 397.6 C1299.5 397.3 1296.9 397.9 1293.9 397.6 C1290.8 397.3 1288.3 395.4 1285.1 395.9 C1282.0 396.4 1276.8 399.6 1275.1 400.3" stroke="#B3C4EA" stroke-width="0.7" fill="none"/>
<path d="M1077.7 323.6 C1080.1 324.7 1088.1 326.5 1091.9 330.0 C1095.6 333.5 1098.7 342.0 1100.1 344.4" stroke="#B3C4EA" stroke-width="0.7" fill="none"/>
<path d="M1033.1 298.5 C1032.2 300.4 1028.9 306.6 1027.6 310.1 C1026.2 313.6 1028.0 315.3 1025.1 319.5 C1022.2 323.8 1014.3 331.1 1010.2 335.6 C1006.2 340.2 1002.3 345.1 1000.8 347.0" stroke="#B3C4EA" stroke-width="0.7" fill="none"/>
<path d="M1040.7 278.4 C1039.1 280.9 1033.9 289.4 1031.4 293.5 C1028.8 297.5 1028.5 300.3 1025.5 302.6 C1022.4 304.9 1015.3 306.5 1013.3 307.2" stroke="#B3C4EA" stroke-width="0.7" fill="none"/>
<path d="M1333.7 432.7 C1335.9 430.2 1343.1 421.2 1346.9 417.6 C1350.8 414.0 1353.8 413.5 1356.7 411.3 C1359.6 409.0 1363.0 405.3 1364.2 404.1" stroke="#B3C4EA" stroke-width="0.7" fill="none"/>
<path d="M1373.4 360.2 C1374.4 357.6 1376.3 349.5 1379.4 344.8 C1382.6 340.0 1389.7 335.5 1392.5 331.5 C1395.3 327.5 1395.7 322.6 1396.4 320.8" stroke="#B3C4EA" stroke-width="0.7" fill="none"/>
<path d="M1193.3 411.6 C1194.0 412.8 1195.0 417.0 1197.5 418.9 C1200.0 420.9 1203.7 422.6 1208.5 423.5 C1213.3 424.4 1223.2 424.3 1226.2 424.5" stroke="#B3C4EA" stroke-width="0.7" fill="none"/>
<path d="M1462.9 344.0 C1465.0 344.5 1471.7 346.9 1475.6 347.1 C1479.6 347.3 1483.3 346.7 1486.7 345.4 C1490.0 344.2 1494.3 340.5 1495.8 339.5" stroke="#A6D8BC" stroke-width="0.7" fill="none"/>
<path d="M1301.7 430.1 C1303.6 429.2 1308.2 426.4 1313.3 424.7 C1318.5 423.1 1327.7 422.5 1332.5 420.2 C1337.3 417.9 1340.6 412.5 1342.2 411.0" stroke="#B3C4EA" stroke-width="0.7" fill="none"/>
<path d="M1344.1 296.9 C1346.1 296.3 1350.6 293.4 1356.2 293.2 C1361.8 293.1 1371.8 295.6 1377.6 296.0 C1383.5 296.4 1389.0 295.8 1391.2 295.7" stroke="#B3C4EA" stroke-width="0.7" fill="none"/>
<path d="M1458.2 396.7 C1460.7 397.8 1468.0 401.1 1473.1 403.1 C1478.3 405.2 1486.6 408.2 1489.2 409.2" stroke="#A6D8BC" stroke-width="0.7" fill="none"/>
<path d="M1295.6 372.2 C1293.5 373.8 1286.0 377.0 1283.1 381.6 C1280.2 386.3 1279.8 395.8 1278.2 400.2 C1276.5 404.6 1273.9 406.8 1273.0 408.1" stroke="#B3C4EA" stroke-width="0.7" fill="none"/>
<path d="M1362.5 285.5 C1364.2 286.1 1369.0 288.7 1372.7 289.4 C1376.4 290.2 1382.8 289.7 1384.8 289.7" stroke="#B3C4EA" stroke-width="0.7" fill="none"/>
<path d="M1115.7 370.4 C1114.9 371.7 1114.6 374.6 1111.2 378.1 C1107.9 381.6 1101.1 387.7 1095.6 391.5 C1090.1 395.2 1081.2 398.9 1078.4 400.4" stroke="#B3C4EA" stroke-width="0.7" fill="none"/>
<path d="M1249.6 416.2 C1251.5 414.5 1258.8 410.0 1261.1 406.0 C1263.5 402.0 1263.2 394.4 1263.6 392.1" stroke="#B3C4EA" stroke-width="0.7" fill="none"/>
<path d="M1087.8 259.7 C1087.3 257.0 1086.1 247.2 1084.6 243.4 C1083.1 239.6 1079.7 237.9 1078.7 236.8" stroke="#B3C4EA" stroke-width="0.7" fill="none"/>
<path d="M1329.9 359.8 C1328.6 359.2 1324.7 356.8 1321.9 356.2 C1319.2 355.6 1314.8 356.2 1313.3 356.2" stroke="#B3C4EA" stroke-width="0.7" fill="none"/>
<path d="M1046.4 344.9 C1049.2 345.2 1057.6 346.0 1062.9 346.5 C1068.2 347.0 1075.5 347.8 1078.0 348.1" stroke="#B3C4EA" stroke-width="0.7" fill="none"/>
<path d="M1335.0 344.9 C1333.1 344.5 1328.9 343.7 1323.8 342.4 C1318.6 341.2 1309.7 340.9 1304.2 337.4 C1298.6 333.9 1292.7 324.3 1290.4 321.7" stroke="#B3C4EA" stroke-width="0.7" fill="none"/>
<path d="M1432.0 297.5 C1430.4 299.3 1424.5 304.6 1422.7 308.2 C1421.0 311.9 1420.3 315.1 1421.4 319.5 C1422.6 324.0 1428.2 332.3 1429.5 334.9" stroke="#A6D8BC" stroke-width="0.7" fill="none"/>
<path d="M1379.2 429.4 C1380.1 431.5 1382.3 438.3 1384.3 441.5 C1386.3 444.8 1387.7 445.4 1391.0 448.8 C1394.4 452.2 1398.6 458.9 1404.2 461.8 C1409.7 464.7 1420.8 465.4 1424.1 466.1" stroke="#B3C4EA" stroke-width="0.7" fill="none"/>
<path d="M1078.0 385.9 C1078.6 388.3 1080.4 396.6 1081.9 400.6 C1083.4 404.6 1084.0 406.3 1086.9 410.1 C1089.8 413.9 1094.5 420.8 1099.1 423.5 C1103.7 426.1 1112.1 425.5 1114.7 425.9" stroke="#B3C4EA" stroke-width="0.7" fill="none"/>
<path d="M1212.6 262.4 C1211.8 265.9 1207.5 276.6 1207.8 283.3 C1208.1 290.1 1211.1 297.3 1214.3 303.2 C1217.6 309.1 1223.3 315.6 1227.3 318.7 C1231.4 321.9 1236.7 321.6 1238.6 322.1" stroke="#B3C4EA" stroke-width="0.7" fill="none"/>
<path d="M1438.4 293.5 C1439.8 291.0 1443.6 281.8 1447.1 278.4 C1450.7 274.9 1455.2 274.6 1459.6 272.8 C1464.1 271.0 1471.4 268.2 1473.8 267.3" stroke="#A6D8BC" stroke-width="0.7" fill="none"/>
<path d="M1238.9 321.1 C1239.8 324.4 1242.5 336.5 1244.2 341.0 C1245.8 345.4 1246.2 345.9 1248.7 347.8 C1251.3 349.8 1256.1 350.7 1259.4 352.5 C1262.8 354.3 1267.2 357.4 1268.8 358.4" stroke="#B3C4EA" stroke-width="0.7" fill="none"/>
<path d="M1127.3 282.1 C1130.7 282.0 1143.2 281.2 1148.1 281.2 C1152.9 281.3 1152.0 280.7 1156.6 282.3 C1161.2 284.0 1171.7 287.8 1175.9 291.0 C1180.0 294.1 1180.5 299.5 1181.4 301.2" stroke="#B3C4EA" stroke-width="0.7" fill="none"/>
<path d="M1086.9 436.1 C1086.1 434.3 1083.6 428.5 1082.2 425.0 C1080.7 421.6 1079.6 418.1 1078.1 415.3 C1076.6 412.6 1075.3 410.5 1073.3 408.6 C1071.4 406.7 1067.7 404.7 1066.6 403.9" stroke="#B3C4EA" stroke-width="0.7" fill="none"/>
<path d="M1354.5 363.7 C1356.1 365.5 1361.1 370.0 1364.1 374.3 C1367.1 378.5 1370.4 384.2 1372.5 389.1 C1374.7 394.1 1376.3 401.6 1377.1 404.1" stroke="#B3C4EA" stroke-width="0.7" fill="none"/>
<path d="M1430.0 443.4 C1428.2 444.4 1423.8 448.6 1419.0 449.9 C1414.2 451.1 1404.1 450.9 1401.2 451.1" stroke="#A6D8BC" stroke-width="0.7" fill="none"/>
<path d="M1307.4 335.9 C1306.2 336.5 1304.6 338.1 1300.2 339.7 C1295.8 341.4 1284.1 344.9 1280.9 345.9" stroke="#B3C4EA" stroke-width="0.7" fill="none"/>
<path d="M1207.9 269.5 C1207.9 266.6 1208.3 256.8 1207.7 252.1 C1207.0 247.4 1206.1 245.1 1204.1 241.3 C1202.1 237.5 1197.2 231.5 1195.8 229.5" stroke="#B3C4EA" stroke-width="0.7" fill="none"/>
<path d="M1075.4 343.7 C1073.6 345.6 1067.9 350.0 1064.8 355.2 C1061.7 360.5 1058.3 369.7 1056.7 375.1 C1055.1 380.6 1055.4 385.9 1055.1 388.0" stroke="#B3C4EA" stroke-width="0.7" fill="none"/>
<path d="M999.5 331.5 C997.6 331.4 991.4 331.6 988.1 330.8 C984.8 330.1 982.1 328.8 979.7 326.8 C977.3 324.9 975.6 322.3 973.4 319.1 C971.1 315.9 967.4 309.5 966.2 307.6" stroke="#B3C4EA" stroke-width="0.7" fill="none"/>
<path d="M1144.3 378.6 C1145.2 380.1 1148.7 382.7 1149.6 387.3 C1150.5 391.9 1150.0 400.1 1149.5 406.3 C1149.1 412.6 1148.4 419.5 1146.9 424.8 C1145.4 430.2 1141.5 436.0 1140.4 438.3" stroke="#B3C4EA" stroke-width="0.7" fill="none"/>
<path d="M1136.8 376.6 C1137.1 379.3 1139.1 387.3 1138.7 393.2 C1138.3 399.2 1134.5 406.6 1134.6 412.2 C1134.6 417.8 1137.3 421.2 1139.0 426.8 C1140.6 432.4 1143.6 442.6 1144.5 445.7" stroke="#B3C4EA" stroke-width="0.7" fill="none"/>
<path d="M1389.3 416.0 C1387.2 413.9 1380.1 406.2 1376.7 403.5 C1373.4 400.9 1372.4 400.5 1369.0 400.2 C1365.5 399.9 1360.8 399.3 1356.0 401.6 C1351.3 403.8 1343.0 411.7 1340.5 413.7" stroke="#A6D8BC" stroke-width="0.7" fill="none"/>
<path d="M1269.9 378.3 C1268.1 377.5 1262.4 374.7 1259.3 373.3 C1256.1 372.0 1254.2 373.5 1250.9 370.1 C1247.6 366.7 1243.7 356.8 1239.5 353.0 C1235.2 349.1 1227.7 347.9 1225.4 346.8" stroke="#B3C4EA" stroke-width="0.7" fill="none"/>
<path d="M1360.7 349.0 C1360.7 345.9 1361.7 336.2 1360.7 330.4 C1359.6 324.7 1356.8 320.2 1354.4 314.5 C1352.0 308.9 1347.5 299.5 1346.1 296.5" stroke="#B3C4EA" stroke-width="0.7" fill="none"/>
<path d="M1036.2 432.0 C1035.1 434.6 1030.4 443.4 1029.6 447.7 C1028.9 451.9 1031.2 455.9 1031.6 457.5" stroke="#B3C4EA" stroke-width="0.7" fill="none"/>
<path d="M1122.2 400.2 C1122.6 402.6 1123.6 408.8 1124.7 414.7 C1125.8 420.7 1126.8 431.1 1128.8 436.0 C1130.7 440.9 1133.0 440.5 1136.3 444.0 C1139.7 447.5 1146.7 454.8 1148.8 457.0" stroke="#B3C4EA" stroke-width="0.7" fill="none"/>
<path d="M1137.5 347.5 C1136.4 344.1 1131.5 331.6 1130.8 326.9 C1130.1 322.1 1132.0 323.5 1133.2 319.0 C1134.4 314.5 1135.2 304.7 1137.8 300.1 C1140.5 295.4 1147.1 292.6 1149.0 291.1" stroke="#B3C4EA" stroke-width="0.7" fill="none"/>
<path d="M1129.3 298.9 C1130.2 297.6 1132.3 293.7 1134.8 291.4 C1137.3 289.1 1142.9 286.0 1144.5 284.9" stroke="#B3C4EA" stroke-width="0.7" fill="none"/>
<path d="M1173.4 373.6 C1172.8 370.7 1172.3 361.9 1169.8 356.2 C1167.3 350.4 1161.2 343.0 1158.6 338.9 C1155.9 334.9 1154.7 333.2 1153.9 332.0" stroke="#B3C4EA" stroke-width="0.7" fill="none"/>
<path d="M1000.7 352.4 C998.4 352.4 990.8 352.1 986.9 352.3 C983.0 352.5 980.9 352.8 977.4 353.9 C973.8 355.0 967.7 358.0 965.8 358.8" stroke="#B3C4EA" stroke-width="0.7" fill="none"/>
<path d="M1163.1 334.7 C1166.5 334.4 1178.1 334.1 1183.6 333.0 C1189.1 332.0 1193.9 329.0 1195.9 328.2" stroke="#B3C4EA" stroke-width="0.7" fill="none"/>
<path d="M1189.6 448.8 C1188.3 445.9 1183.2 436.6 1182.1 431.8 C1181.0 427.0 1184.4 424.3 1183.0 419.9 C1181.7 415.4 1175.5 407.6 1174.1 405.1" stroke="#B3C4EA" stroke-width="0.7" fill="none"/>
<path d="M1307.0 287.3 C1308.7 287.0 1312.4 287.0 1317.5 285.5 C1322.6 284.0 1331.1 278.9 1337.6 278.3 C1344.1 277.7 1353.4 281.4 1356.6 282.0" stroke="#B3C4EA" stroke-width="0.7" fill="none"/>
<path d="M1305.0 432.6 C1306.1 431.5 1308.1 427.6 1311.4 426.1 C1314.7 424.6 1321.0 424.0 1324.9 423.6 C1328.9 423.2 1331.1 422.3 1334.9 423.4 C1338.7 424.5 1345.7 429.3 1347.9 430.5" stroke="#B3C4EA" stroke-width="0.7" fill="none"/>
<path d="M1441.3 363.5 C1442.6 365.0 1446.6 367.8 1449.3 372.7 C1451.9 377.6 1454.1 387.3 1457.3 392.8 C1460.6 398.3 1466.8 403.6 1468.7 405.7" stroke="#A6D8BC" stroke-width="0.7" fill="none"/>
<path d="M1144.9 364.9 C1143.6 365.6 1141.0 366.8 1136.8 368.9 C1132.6 371.1 1122.4 376.1 1119.5 377.6" stroke="#B3C4EA" stroke-width="0.7" fill="none"/>
<path d="M1265.9 345.1 C1264.9 347.5 1260.7 355.3 1259.6 359.4 C1258.4 363.5 1259.3 366.0 1258.9 369.8 C1258.5 373.6 1257.5 380.1 1257.2 382.2" stroke="#B3C4EA" stroke-width="0.7" fill="none"/>
<path d="M1177.6 412.8 C1177.5 415.1 1176.9 421.7 1177.0 426.5 C1177.0 431.4 1177.9 439.3 1178.1 441.8" stroke="#B3C4EA" stroke-width="0.7" fill="none"/>
<path d="M1181.8 323.3 C1183.7 324.3 1189.5 326.7 1193.3 329.4 C1197.0 332.2 1201.3 335.2 1204.5 340.0 C1207.7 344.8 1211.1 355.2 1212.4 358.2" stroke="#B3C4EA" stroke-width="0.7" fill="none"/>
<path d="M1043.9 429.4 C1041.4 431.9 1034.7 441.1 1029.1 444.7 C1023.4 448.3 1013.8 448.7 1009.8 451.0 C1005.8 453.2 1008.5 454.6 1005.1 458.0 C1001.7 461.3 991.9 468.9 989.3 471.0" stroke="#B3C4EA" stroke-width="0.7" fill="none"/>
<path d="M1228.5 370.6 C1231.4 372.5 1241.0 379.0 1245.8 382.5 C1250.6 385.9 1252.9 388.0 1257.5 391.2 C1262.1 394.4 1270.8 399.7 1273.4 401.4" stroke="#B3C4EA" stroke-width="0.7" fill="none"/>
<path d="M1107.5 287.9 C1110.3 289.2 1118.7 292.5 1123.9 295.6 C1129.1 298.8 1136.3 305.0 1138.8 306.9" stroke="#B3C4EA" stroke-width="0.7" fill="none"/>
<path d="M1220.8 363.8 C1224.3 363.3 1236.0 361.4 1241.5 361.2 C1247.0 360.9 1251.7 362.0 1253.7 362.1" stroke="#B3C4EA" stroke-width="0.7" fill="none"/>
<path d="M1061.1 306.8 C1060.5 305.4 1060.5 302.3 1057.9 298.0 C1055.3 293.7 1049.2 284.6 1045.5 280.8 C1041.7 277.0 1037.8 277.1 1035.3 275.1 C1032.8 273.0 1031.3 269.7 1030.5 268.7" stroke="#B3C4EA" stroke-width="0.7" fill="none"/>
<path d="M1259.7 448.3 C1258.4 451.5 1254.0 462.3 1252.1 467.2 C1250.2 472.1 1248.9 472.5 1248.2 477.8 C1247.6 483.2 1248.4 495.7 1248.4 499.3" stroke="#B3C4EA" stroke-width="0.7" fill="none"/>
<path d="M1340.8 317.4 C1343.0 319.2 1350.0 326.1 1354.1 328.1 C1358.1 330.0 1361.2 328.9 1365.2 329.1 C1369.3 329.2 1376.2 328.9 1378.4 328.9" stroke="#B3C4EA" stroke-width="0.7" fill="none"/>
<path d="M1238.1 391.2 C1238.2 389.4 1237.2 385.0 1238.7 380.5 C1240.2 375.9 1244.8 368.4 1247.0 364.1 C1249.3 359.8 1251.2 356.1 1252.0 354.5" stroke="#B3C4EA" stroke-width="0.7" fill="none"/>
<path d="M1469.4 318.2 C1470.1 316.4 1471.8 310.1 1473.8 307.4 C1475.9 304.7 1480.2 302.7 1481.5 301.7" stroke="#A6D8BC" stroke-width="0.7" fill="none"/>
<path d="M1301.4 374.9 C1303.5 372.9 1310.2 365.1 1313.9 362.9 C1317.7 360.7 1320.5 362.3 1323.9 361.5 C1327.3 360.8 1332.6 358.9 1334.4 358.4" stroke="#B3C4EA" stroke-width="0.7" fill="none"/>
<path d="M1471.4 286.0 C1473.8 285.7 1481.2 284.2 1485.6 284.3 C1490.0 284.4 1495.8 286.2 1497.8 286.5" stroke="#A6D8BC" stroke-width="0.7" fill="none"/>
<path d="M1053.9 274.1 C1056.8 276.1 1067.6 282.9 1071.3 286.0 C1075.0 289.1 1075.4 291.7 1076.3 292.8" stroke="#B3C4EA" stroke-width="0.7" fill="none"/>
<path d="M1321.2 330.9 C1320.2 332.2 1316.3 335.5 1315.1 338.2 C1313.9 341.0 1314.3 342.4 1314.2 347.3 C1314.0 352.2 1314.2 364.3 1314.2 367.7" stroke="#B3C4EA" stroke-width="0.7" fill="none"/>
<path d="M1271.1 403.2 C1268.9 403.9 1261.4 404.7 1257.7 407.4 C1254.0 410.0 1252.0 414.0 1249.0 419.1 C1246.0 424.2 1241.3 434.7 1239.8 437.8" stroke="#B3C4EA" stroke-width="0.7" fill="none"/>
<path d="M1092.6 328.2 C1094.3 327.4 1099.0 324.6 1102.9 323.1 C1106.8 321.6 1113.8 319.9 1116.0 319.2" stroke="#B3C4EA" stroke-width="0.7" fill="none"/>
<path d="M1181.2 347.2 C1181.1 344.1 1180.0 333.6 1181.1 328.7 C1182.2 323.8 1186.6 319.7 1187.7 317.9" stroke="#B3C4EA" stroke-width="0.7" fill="none"/>
<path d="M1131.1 441.0 C1129.7 438.4 1123.9 430.0 1122.8 425.4 C1121.6 420.8 1122.7 417.8 1124.0 413.3 C1125.3 408.8 1129.5 400.8 1130.6 398.3" stroke="#B3C4EA" stroke-width="0.7" fill="none"/>
<path d="M1389.7 438.8 C1392.7 438.4 1401.5 437.3 1407.6 436.3 C1413.7 435.3 1423.0 433.4 1426.1 432.8" stroke="#A6D8BC" stroke-width="0.7" fill="none"/>
<path d="M1382.1 432.6 C1383.5 431.6 1386.5 428.3 1391.0 426.9 C1395.5 425.6 1406.1 424.8 1409.1 424.3" stroke="#A6D8BC" stroke-width="0.7" fill="none"/>
<path d="M1398.0 405.8 C1397.1 403.6 1393.4 397.4 1392.5 392.5 C1391.6 387.5 1392.6 381.1 1392.6 376.1 C1392.7 371.2 1392.9 364.9 1392.9 362.7" stroke="#A6D8BC" stroke-width="0.7" fill="none"/>
<path d="M1076.6 336.5 C1075.5 334.7 1070.6 331.0 1069.9 325.8 C1069.2 320.7 1070.5 310.3 1072.3 305.6 C1074.0 300.8 1079.2 298.8 1080.6 297.4" stroke="#B3C4EA" stroke-width="0.7" fill="none"/>
<path d="M1039.8 277.3 C1038.4 276.3 1035.3 272.4 1031.5 271.0 C1027.7 269.6 1021.0 270.5 1017.2 269.0 C1013.3 267.5 1012.2 265.2 1008.4 261.9 C1004.7 258.6 996.8 251.3 994.5 249.2" stroke="#B3C4EA" stroke-width="0.7" fill="none"/>
<path d="M1367.4 407.2 C1366.6 409.2 1364.6 416.1 1362.6 419.5 C1360.7 422.9 1357.5 424.6 1355.6 427.7 C1353.8 430.9 1352.4 436.7 1351.7 438.5" stroke="#B3C4EA" stroke-width="0.7" fill="none"/>
<path d="M1073.4 427.0 C1071.5 427.2 1066.1 427.0 1061.9 428.3 C1057.7 429.7 1052.0 433.8 1048.2 435.3 C1044.4 436.9 1040.7 437.4 1039.2 437.8" stroke="#B3C4EA" stroke-width="0.7" fill="none"/>
<path d="M1224.0 266.0 C1227.0 267.7 1237.2 274.7 1242.2 276.1 C1247.2 277.5 1252.2 274.7 1254.2 274.4" stroke="#B3C4EA" stroke-width="0.7" fill="none"/>
<path d="M1056.8 295.0 C1058.1 294.2 1061.6 291.7 1064.3 289.9 C1067.0 288.1 1068.8 286.5 1073.1 284.2 C1077.4 281.9 1086.0 277.8 1090.2 276.2 C1094.3 274.6 1096.8 274.8 1098.1 274.6" stroke="#B3C4EA" stroke-width="0.7" fill="none"/>
<path d="M1308.2 393.8 C1307.5 395.3 1304.7 399.4 1303.9 402.9 C1303.1 406.3 1303.6 412.5 1303.6 414.4" stroke="#B3C4EA" stroke-width="0.7" fill="none"/>
<path d="M1289.7 382.8 C1289.4 385.1 1287.9 391.3 1287.6 396.4 C1287.3 401.4 1288.0 410.3 1288.0 413.1" stroke="#B3C4EA" stroke-width="0.7" fill="none"/>
<path d="M1036.8 265.0 C1035.5 265.9 1032.3 267.8 1029.2 270.6 C1026.1 273.4 1021.3 279.0 1018.1 281.7 C1015.0 284.4 1011.7 286.0 1010.4 286.9" stroke="#B3C4EA" stroke-width="0.7" fill="none"/>
<path d="M1078.4 391.1 C1076.2 391.9 1069.2 392.4 1065.3 395.6 C1061.4 398.9 1058.6 407.3 1054.7 410.7 C1050.9 414.2 1044.2 415.5 1042.1 416.4" stroke="#B3C4EA" stroke-width="0.7" fill="none"/>
<path d="M1007.8 404.7 C1007.5 401.6 1007.0 390.8 1006.1 386.6 C1005.1 382.4 1002.7 383.0 1002.1 379.5 C1001.6 376.0 1001.6 369.9 1002.9 365.6 C1004.1 361.3 1008.3 355.6 1009.4 353.6" stroke="#B3C4EA" stroke-width="0.7" fill="none"/>
<path d="M1427.2 346.6 C1428.7 347.2 1433.3 348.1 1436.4 350.4 C1439.5 352.7 1444.1 358.7 1445.6 360.3" stroke="#A6D8BC" stroke-width="0.7" fill="none"/>
<path d="M1276.8 435.2 C1275.8 433.5 1273.2 429.8 1270.3 425.1 C1267.4 420.5 1261.2 410.2 1259.4 407.2" stroke="#B3C4EA" stroke-width="0.7" fill="none"/>
<path d="M1051.8 352.2 C1052.0 348.9 1054.7 338.7 1053.1 332.5 C1051.4 326.3 1043.7 318.0 1041.8 315.1" stroke="#B3C4EA" stroke-width="0.7" fill="none"/>
<path d="M1151.5 374.5 C1151.1 371.7 1149.0 362.3 1149.1 358.0 C1149.2 353.6 1151.7 349.8 1152.2 348.2" stroke="#B3C4EA" stroke-width="0.7" fill="none"/>
<path d="M1380.1 301.2 C1378.4 301.4 1373.4 301.3 1369.7 302.7 C1366.0 304.1 1359.9 308.4 1358.0 309.6" stroke="#A6D8BC" stroke-width="0.7" fill="none"/>
<path d="M1250.2 331.9 C1250.6 335.1 1250.6 345.0 1252.9 351.1 C1255.1 357.2 1262.0 365.4 1263.8 368.3" stroke="#B3C4EA" stroke-width="0.7" fill="none"/>
<path d="M1407.6 386.7 C1405.2 385.4 1398.1 381.5 1393.4 378.6 C1388.7 375.7 1384.0 371.5 1379.4 369.3 C1374.9 367.0 1368.4 365.6 1366.2 364.9" stroke="#A6D8BC" stroke-width="0.7" fill="none"/>
<path d="M1281.6 339.9 C1280.6 338.4 1280.3 333.6 1275.9 331.0 C1271.5 328.5 1260.9 326.1 1255.1 324.4 C1249.4 322.7 1243.7 321.4 1241.4 320.8" stroke="#B3C4EA" stroke-width="0.7" fill="none"/>
<path d="M1299.0 414.6 C1299.6 413.2 1301.5 409.9 1302.5 406.4 C1303.6 402.9 1303.3 397.7 1305.2 393.5 C1307.1 389.4 1312.6 383.4 1314.1 381.4" stroke="#B3C4EA" stroke-width="0.7" fill="none"/>
<path d="M1317.7 266.7 C1320.2 268.3 1327.4 274.8 1333.0 276.3 C1338.7 277.8 1346.0 274.4 1351.6 275.7 C1357.1 277.1 1363.1 281.8 1366.4 284.3 C1369.7 286.8 1370.6 289.8 1371.5 290.9" stroke="#B3C4EA" stroke-width="0.7" fill="none"/>
<path d="M1031.2 375.7 C1028.6 373.1 1020.9 365.4 1015.7 360.4 C1010.6 355.3 1002.9 348.0 1000.4 345.5" stroke="#B3C4EA" stroke-width="0.7" fill="none"/>
<path d="M1443.3 290.4 C1442.5 288.4 1439.4 282.0 1438.6 278.3 C1437.9 274.6 1438.6 269.8 1438.6 268.1" stroke="#A6D8BC" stroke-width="0.7" fill="none"/>
<path d="M1433.8 311.2 C1434.1 307.7 1434.9 296.1 1435.3 289.8 C1435.6 283.5 1435.8 276.2 1435.9 273.5" stroke="#A6D8BC" stroke-width="0.7" fill="none"/>
<path d="M1297.7 304.1 C1297.2 305.7 1297.3 310.5 1294.4 313.8 C1291.5 317.2 1282.7 322.5 1280.4 324.2" stroke="#B3C4EA" stroke-width="0.7" fill="none"/>
<path d="M1433.3 291.1 C1434.1 289.9 1434.1 286.7 1438.1 283.9 C1442.1 281.0 1454.1 275.7 1457.3 274.0" stroke="#A6D8BC" stroke-width="0.7" fill="none"/>
<path d="M1218.7 358.1 C1217.0 356.2 1210.8 351.4 1208.4 346.5 C1205.9 341.7 1204.8 331.7 1204.1 328.7" stroke="#B3C4EA" stroke-width="0.7" fill="none"/>
<path d="M1179.2 330.4 C1177.5 333.0 1171.8 342.1 1169.4 346.3 C1166.9 350.5 1165.4 354.1 1164.6 355.7" stroke="#B3C4EA" stroke-width="0.7" fill="none"/>
<path d="M1359.6 268.2 C1360.3 264.6 1360.5 253.2 1363.3 247.0 C1366.2 240.7 1371.6 234.5 1376.7 230.8 C1381.8 227.1 1391.1 225.9 1394.0 224.9" stroke="#B3C4EA" stroke-width="0.7" fill="none"/>
<path d="M1361.4 301.1 C1360.9 303.6 1360.4 312.4 1358.9 316.1 C1357.4 319.8 1354.4 319.6 1352.4 323.5 C1350.4 327.5 1347.3 335.7 1346.8 339.7 C1346.3 343.7 1349.0 346.0 1349.4 347.3" stroke="#B3C4EA" stroke-width="0.7" fill="none"/>
<path d="M1171.2 279.2 C1170.1 280.9 1165.9 285.7 1164.8 289.6 C1163.6 293.5 1164.3 300.5 1164.2 302.7" stroke="#B3C4EA" stroke-width="0.7" fill="none"/>
<path d="M1400.8 289.1 C1403.0 290.0 1410.3 293.9 1414.1 294.4 C1417.9 294.9 1422.2 292.5 1423.9 292.1" stroke="#A6D8BC" stroke-width="0.7" fill="none"/>
<path d="M1321.8 310.3 C1321.0 307.1 1317.1 297.0 1317.2 291.3 C1317.3 285.5 1321.4 278.4 1322.3 275.8" stroke="#B3C4EA" stroke-width="0.7" fill="none"/>
<path d="M1279.6 373.4 C1276.2 374.2 1264.5 375.5 1259.5 378.3 C1254.5 381.1 1252.3 386.6 1249.7 390.2 C1247.0 393.8 1244.7 398.2 1243.7 399.8" stroke="#B3C4EA" stroke-width="0.7" fill="none"/>
<path d="M1027.3 407.0 C1029.0 407.5 1033.4 409.2 1037.6 410.1 C1041.8 411.1 1047.5 411.3 1052.6 412.8 C1057.8 414.3 1063.2 417.3 1068.5 419.1 C1073.8 420.8 1081.9 422.6 1084.5 423.3" stroke="#B3C4EA" stroke-width="0.7" fill="none"/>
<path d="M1245.7 271.1 C1244.5 268.3 1242.9 258.8 1238.9 254.4 C1234.9 250.0 1226.0 248.3 1221.5 245.0 C1217.0 241.6 1214.3 238.2 1211.8 234.2 C1209.3 230.2 1207.2 223.1 1206.3 220.9" stroke="#B3C4EA" stroke-width="0.7" fill="none"/>
<path d="M1108.6 279.0 C1110.6 281.7 1118.6 289.2 1120.8 295.4 C1123.0 301.7 1121.6 313.1 1121.7 316.6" stroke="#B3C4EA" stroke-width="0.7" fill="none"/>
<path d="M1126.7 269.0 C1124.4 266.8 1116.6 259.4 1113.0 255.8 C1109.3 252.2 1108.1 251.8 1104.8 247.4 C1101.4 243.0 1097.8 234.3 1093.1 229.4 C1088.3 224.5 1079.1 219.8 1076.3 217.9" stroke="#B3C4EA" stroke-width="0.7" fill="none"/>
<path d="M1006.4 308.5 C1007.2 310.0 1010.6 314.2 1011.3 317.4 C1012.0 320.7 1010.4 323.6 1010.5 328.1 C1010.6 332.6 1010.8 338.5 1011.8 344.5 C1012.8 350.4 1015.8 360.6 1016.7 363.8" stroke="#B3C4EA" stroke-width="0.7" fill="none"/>
<path d="M1446.0 445.5 C1447.7 442.7 1452.0 433.6 1456.0 428.5 C1460.1 423.4 1466.1 419.3 1470.5 414.7 C1474.9 410.1 1479.0 404.7 1482.5 401.1 C1486.0 397.4 1490.0 394.0 1491.5 392.6" stroke="#A6D8BC" stroke-width="0.7" fill="none"/>
<path d="M1101.8 377.3 C1103.2 377.3 1105.8 379.1 1110.2 377.2 C1114.5 375.4 1125.0 367.9 1128.0 366.1" stroke="#B3C4EA" stroke-width="0.7" fill="none"/>
<path d="M1166.3 285.9 C1168.9 285.0 1178.8 282.6 1182.4 280.5 C1185.9 278.4 1186.6 274.4 1187.5 273.1" stroke="#B3C4EA" stroke-width="0.7" fill="none"/>
<path d="M1021.6 421.7 C1023.3 418.9 1028.4 408.4 1031.3 404.8 C1034.2 401.3 1037.8 401.2 1039.1 400.5" stroke="#B3C4EA" stroke-width="0.7" fill="none"/>
<path d="M1419.9 432.7 C1421.3 431.6 1426.0 430.4 1428.1 425.7 C1430.3 421.1 1431.9 408.4 1432.6 404.9" stroke="#A6D8BC" stroke-width="0.7" fill="none"/>
<path d="M1440.9 402.2 C1442.7 403.9 1446.9 409.7 1451.8 412.1 C1456.7 414.4 1465.5 414.7 1470.4 416.2 C1475.4 417.8 1477.7 420.0 1481.4 421.2 C1485.2 422.4 1491.0 423.1 1492.9 423.5" stroke="#A6D8BC" stroke-width="0.7" fill="none"/>
<path d="M1169.2 435.7 C1171.2 438.1 1177.9 445.7 1181.2 450.2 C1184.4 454.7 1185.2 458.6 1188.8 462.7 C1192.4 466.8 1200.3 472.9 1202.6 474.9" stroke="#B3C4EA" stroke-width="0.7" fill="none"/>
<path d="M1381.7 264.9 C1378.7 265.2 1368.7 266.3 1363.9 266.7 C1359.1 267.0 1354.7 267.1 1352.9 267.2" stroke="#A6D8BC" stroke-width="0.7" fill="none"/>
<path d="M1417.2 276.3 C1418.1 273.9 1421.4 267.3 1422.4 261.9 C1423.5 256.4 1423.2 246.5 1423.4 243.4" stroke="#A6D8BC" stroke-width="0.7" fill="none"/>
<path d="M1025.2 325.1 C1026.1 326.6 1028.7 330.8 1030.7 334.1 C1032.8 337.4 1036.3 341.2 1037.6 345.0 C1038.9 348.7 1039.5 352.9 1038.7 356.6 C1037.9 360.2 1033.7 365.2 1032.7 366.9" stroke="#B3C4EA" stroke-width="0.7" fill="none"/>
<path d="M1103.1 391.9 C1100.6 390.1 1093.3 385.1 1087.7 381.3 C1082.1 377.5 1072.6 371.1 1069.5 369.1" stroke="#B3C4EA" stroke-width="0.7" fill="none"/>
<path d="M1271.2 278.9 C1270.4 281.0 1268.6 288.5 1266.7 291.6 C1264.7 294.7 1260.7 296.4 1259.5 297.4" stroke="#B3C4EA" stroke-width="0.7" fill="none"/>
<path d="M1429.9 263.8 C1430.9 266.2 1432.0 273.5 1435.6 278.3 C1439.3 283.2 1447.0 287.7 1451.8 292.9 C1456.6 298.1 1462.6 306.9 1464.7 309.7" stroke="#A6D8BC" stroke-width="0.7" fill="none"/>
<path d="M1060.5 371.9 C1060.2 369.8 1059.3 362.9 1058.3 359.2 C1057.2 355.5 1054.6 354.3 1054.1 349.9 C1053.6 345.5 1054.3 337.1 1055.2 332.7 C1056.0 328.2 1058.5 324.7 1059.2 323.1" stroke="#B3C4EA" stroke-width="0.7" fill="none"/>
<path d="M1211.8 406.0 C1209.1 405.2 1200.3 403.5 1195.4 401.5 C1190.5 399.5 1184.6 395.0 1182.5 393.7" stroke="#B3C4EA" stroke-width="0.7" fill="none"/>
<path d="M1128.7 402.4 C1128.7 400.7 1129.4 395.9 1128.7 392.2 C1128.0 388.6 1125.6 384.0 1124.3 380.4 C1123.0 376.9 1122.5 373.8 1121.0 370.7 C1119.5 367.6 1116.3 363.2 1115.3 361.7" stroke="#B3C4EA" stroke-width="0.7" fill="none"/>
<path d="M999.0 284.8 C1004.1 284.7 1021.1 284.5 1029.4 284.1 C1037.8 283.7 1041.5 283.1 1049.1 282.5 C1056.7 281.9 1067.1 280.8 1074.9 280.3 C1082.8 279.8 1089.6 280.0 1096.2 279.5 C1102.8 279.0 1108.6 278.1 1114.4 277.2 C1120.2 276.3 1128.3 274.7 1131.1 274.2" stroke="#96ACDD" stroke-width="1.1" fill="none"/>
<path d="M1040.0 259.0 C1038.2 261.8 1033.0 270.1 1029.4 275.7 C1025.9 281.3 1022.2 287.6 1018.7 292.4 C1015.2 297.2 1011.4 301.8 1008.1 304.6 C1004.8 307.4 1000.5 308.4 999.0 309.1" stroke="#96ACDD" stroke-width="1.1" fill="none"/>
<path d="M1014.2 292.4 C1018.0 295.2 1030.9 304.0 1037.0 309.1 C1043.1 314.2 1046.8 318.0 1050.6 322.8 C1054.4 327.6 1057.3 332.8 1059.8 338.0 C1062.3 343.2 1063.8 347.8 1065.8 354.0 C1067.8 360.2 1069.6 367.3 1072.0 375.0 C1074.4 382.7 1077.0 390.8 1080.0 400.0 C1083.0 409.2 1087.5 421.8 1090.0 430.0 C1092.5 438.2 1094.2 445.8 1095.0 449.0" stroke="#96ACDD" stroke-width="1.1" fill="none"/>
<path d="M1114.4 286.3 C1115.9 288.3 1121.7 294.7 1123.5 298.5 C1125.3 302.3 1124.8 307.3 1125.1 309.1" stroke="#96ACDD" stroke-width="1.1" fill="none"/>
<path d="M1202.5 259.0 C1203.0 262.0 1206.6 270.6 1205.6 277.2 C1204.6 283.8 1199.3 291.9 1196.5 298.5 C1193.7 305.1 1190.4 310.6 1188.9 316.7 C1187.4 322.8 1186.0 328.7 1187.3 334.9 C1188.6 341.1 1195.0 350.8 1196.5 354.0" stroke="#96ACDD" stroke-width="1.1" fill="none"/>
<path d="M1314.9 259.0 C1314.7 263.1 1312.6 276.2 1313.4 283.3 C1314.2 290.4 1317.7 295.4 1319.5 301.5 C1321.3 307.6 1322.7 311.1 1324.0 319.8 C1325.3 328.6 1326.6 348.3 1327.1 354.0" stroke="#96ACDD" stroke-width="1.1" fill="none"/>
<path d="M1363.5 259.0 C1363.2 264.1 1363.0 280.5 1362.0 289.4 C1361.0 298.3 1361.0 301.4 1357.4 312.2 C1353.9 323.0 1343.5 347.0 1340.7 354.0" stroke="#96ACDD" stroke-width="1.1" fill="none"/>
<path d="M1439.4 259.0 C1441.9 262.8 1449.5 274.2 1454.6 281.8 C1459.7 289.4 1465.0 297.8 1469.8 304.6 C1474.6 311.4 1481.2 319.8 1483.5 322.8" stroke="#96ACDD" stroke-width="1.1" fill="none"/>
<path d="M1380.0 294.0 C1386.7 293.7 1408.2 291.8 1420.0 292.0 C1431.8 292.2 1440.3 296.0 1451.0 295.0 C1461.7 294.0 1478.5 287.5 1484.0 286.0" stroke="#96ACDD" stroke-width="1.1" fill="none"/>
<path d="M1431.9 350.1 C1435.7 349.4 1446.0 347.1 1454.6 345.6 C1463.2 344.1 1478.7 341.8 1483.5 341.0" stroke="#96ACDD" stroke-width="1.1" fill="none"/>
<path d="M1409.0 390.0 C1410.8 395.0 1417.3 410.2 1420.0 420.0 C1422.7 429.8 1424.2 444.2 1425.0 449.0" stroke="#96ACDD" stroke-width="1.1" fill="none"/>
<path d="M999.0 369.2 C1002.8 368.7 1011.6 367.4 1021.8 366.2 C1032.0 365.0 1049.6 362.8 1060.0 362.0 C1070.4 361.2 1068.8 362.4 1084.0 361.6 C1099.2 360.8 1131.6 358.6 1150.9 357.0 C1170.2 355.4 1191.8 352.8 1200.0 352.0" stroke="#96ACDD" stroke-width="1.1" fill="none"/>
<path d="M1084.0 411.7 C1092.6 413.5 1122.0 420.0 1135.7 422.3 C1149.4 424.6 1148.4 423.6 1166.1 425.4 C1183.8 427.2 1229.3 431.7 1242.0 433.0" stroke="#96ACDD" stroke-width="1.1" fill="none"/>
<path d="M999.0 440.0 C1005.8 438.8 1026.5 433.3 1040.0 433.0 C1053.5 432.7 1066.7 438.5 1080.0 438.0 C1093.3 437.5 1113.3 431.3 1120.0 430.0" stroke="#96ACDD" stroke-width="1.1" fill="none"/>
<path d="M1242.0 396.5 C1245.8 394.5 1258.5 387.4 1264.8 384.4 C1271.1 381.4 1277.5 379.3 1280.0 378.3" stroke="#96ACDD" stroke-width="1.1" fill="none"/>
<path d="M1272.4 399.6 C1273.7 402.1 1277.5 409.7 1280.0 414.8 C1282.5 419.9 1285.1 424.3 1287.6 430.0 C1290.1 435.7 1293.9 445.8 1295.2 449.0" stroke="#96ACDD" stroke-width="1.1" fill="none"/>
<path d="M1242.0 440.0 C1245.8 439.3 1256.2 436.3 1265.0 436.0 C1273.8 435.7 1285.8 436.5 1295.0 438.0 C1304.2 439.5 1313.3 443.2 1320.0 445.0 C1326.7 446.8 1332.5 448.3 1335.0 449.0" stroke="#96ACDD" stroke-width="1.1" fill="none"/>
<path d="M1348.0 305.0 C1350.3 309.2 1357.0 322.5 1362.0 330.0 C1367.0 337.5 1372.5 345.0 1378.0 350.0 C1383.5 355.0 1392.2 358.3 1395.0 360.0" stroke="#96ACDD" stroke-width="1.1" fill="none"/>
<path d="M1140.0 259.0 C1143.3 259.5 1152.5 261.5 1160.0 262.0 C1167.5 262.5 1178.3 262.5 1185.0 262.0 C1191.7 261.5 1197.5 259.5 1200.0 259.0" stroke="#96ACDD" stroke-width="1.1" fill="none"/>
<path d="M1030.0 330.0 C1031.7 333.3 1035.8 344.2 1040.0 350.0 C1044.2 355.8 1052.5 362.5 1055.0 365.0" stroke="#96ACDD" stroke-width="1.1" fill="none"/>
<path d="M1000.0 395.0 C1003.3 394.5 1012.5 391.2 1020.0 392.0 C1027.5 392.8 1038.0 397.0 1045.0 400.0 C1052.0 403.0 1059.2 408.3 1062.0 410.0" stroke="#96ACDD" stroke-width="1.1" fill="none"/>
<path d="M1420.0 400.0 C1423.3 403.3 1433.3 413.3 1440.0 420.0 C1446.7 426.7 1456.7 436.7 1460.0 440.0" stroke="#96ACDD" stroke-width="1.1" fill="none"/>
<path d="M999.0 341.0 C1002.8 338.7 1014.2 331.4 1021.8 327.3 C1029.4 323.2 1037.8 318.3 1044.6 316.7 C1051.4 315.1 1058.2 317.0 1062.8 317.5 C1067.3 318.0 1068.4 319.6 1071.9 319.8 C1075.4 320.1 1080.0 319.3 1084.0 319.0 C1088.0 318.7 1091.1 318.8 1096.2 318.2 C1101.3 317.6 1109.1 316.2 1114.4 315.2 C1119.7 314.2 1125.8 312.7 1128.1 312.2" stroke="#8AA1D9" stroke-width="1.8" fill="none"/>
<path d="M1099.2 259.0 C1098.7 262.0 1097.1 269.6 1096.2 277.2 C1095.3 284.8 1093.9 296.2 1093.9 304.6 C1093.9 313.0 1094.3 321.2 1096.2 327.3 C1098.1 333.4 1102.3 336.6 1105.3 341.0 C1108.3 345.4 1109.8 348.6 1114.4 354.0 C1119.0 359.4 1126.6 367.4 1132.7 373.7 C1138.8 380.0 1145.3 386.9 1150.9 392.0 C1156.5 397.1 1162.6 399.8 1166.1 404.1 C1169.6 408.4 1170.8 410.3 1172.1 417.8 C1173.4 425.3 1173.4 443.8 1173.7 449.0" stroke="#8AA1D9" stroke-width="1.8" fill="none"/>
<path d="M1131.1 259.0 C1133.1 262.0 1140.0 271.4 1143.3 277.2 C1146.6 283.0 1147.6 289.3 1150.9 293.9 C1154.2 298.5 1157.9 302.1 1163.0 304.6 C1168.1 307.1 1173.2 307.6 1181.3 309.1 C1189.4 310.6 1201.5 311.9 1211.6 313.7 C1221.7 315.5 1233.6 317.8 1242.0 319.8 C1250.4 321.9 1255.7 323.5 1262.0 326.0 C1268.3 328.5 1277.0 333.5 1280.0 335.0" stroke="#8AA1D9" stroke-width="1.8" fill="none"/>
<path d="M1131.1 312.2 C1134.4 314.0 1145.1 320.3 1150.9 322.8 C1156.7 325.3 1158.5 326.0 1166.1 327.3 C1173.7 328.6 1186.4 330.6 1196.5 330.4 C1206.6 330.1 1219.2 327.1 1226.8 325.8 C1234.4 324.5 1239.5 323.3 1242.0 322.8" stroke="#8AA1D9" stroke-width="1.8" fill="none"/>
<path d="M1181.3 298.5 C1183.8 295.7 1190.2 285.9 1196.5 281.8 C1202.8 277.8 1211.6 276.5 1219.2 274.2 C1226.8 271.9 1234.9 269.8 1242.0 268.1 C1249.1 266.4 1255.7 265.0 1262.0 264.0 C1268.3 263.0 1277.0 262.3 1280.0 262.0" stroke="#8AA1D9" stroke-width="1.8" fill="none"/>
<path d="M1242.0 309.1 C1247.1 307.1 1262.3 300.5 1272.4 297.0 C1282.5 293.5 1292.7 291.2 1302.8 287.9 C1312.9 284.6 1325.5 280.5 1333.1 277.2 C1340.7 273.9 1344.2 271.1 1348.3 268.1 C1352.3 265.1 1355.9 260.5 1357.4 259.0" stroke="#8AA1D9" stroke-width="1.8" fill="none"/>
<path d="M1264.8 259.0 C1265.3 262.6 1266.5 271.9 1267.8 280.3 C1269.1 288.7 1270.1 302.0 1272.4 309.1 C1274.7 316.2 1279.0 315.3 1281.5 322.8 C1284.0 330.3 1286.6 348.8 1287.6 354.0" stroke="#8AA1D9" stroke-width="1.8" fill="none"/>
<path d="M1333.1 325.8 C1338.2 323.0 1354.6 315.7 1363.5 309.1 C1372.4 302.5 1380.0 292.6 1386.3 286.3 C1392.6 280.0 1396.4 274.5 1401.5 271.2 C1406.6 267.9 1411.6 268.6 1416.7 266.6 C1421.8 264.6 1429.4 260.3 1431.9 259.0" stroke="#8AA1D9" stroke-width="1.8" fill="none"/>
<path d="M999.0 426.9 C1006.6 424.9 1031.9 417.6 1044.6 414.8 C1057.3 412.0 1066.2 412.0 1075.0 410.2 C1083.8 408.4 1087.6 406.1 1097.7 404.1 C1107.8 402.1 1126.8 399.8 1135.7 398.0 C1144.6 396.2 1143.3 395.8 1150.9 393.5 C1158.5 391.2 1173.7 386.4 1181.3 384.4 C1188.9 382.4 1186.4 384.3 1196.5 381.3 C1206.6 378.3 1231.1 369.4 1242.0 366.2 C1252.9 363.0 1255.7 362.8 1262.0 362.0 C1268.3 361.2 1277.0 361.7 1280.0 361.6" stroke="#8AA1D9" stroke-width="1.8" fill="none"/>
<path d="M1331.6 354.0 C1331.8 357.3 1333.1 367.4 1333.1 373.7 C1333.1 380.0 1332.9 387.7 1331.6 392.0 C1330.3 396.3 1328.3 397.1 1325.5 399.6 C1322.7 402.1 1320.0 405.1 1314.9 407.2 C1309.8 409.3 1301.7 412.4 1295.0 412.0 C1288.3 411.6 1280.5 408.3 1275.0 405.0 C1269.5 401.7 1266.2 397.0 1262.0 392.0 C1257.8 387.0 1252.8 381.2 1250.0 375.0 C1247.2 368.8 1245.0 361.2 1245.0 355.0 C1245.0 348.8 1246.7 342.5 1250.0 338.0 C1253.3 333.5 1258.3 330.7 1265.0 328.0 C1271.7 325.3 1281.7 322.5 1290.0 322.0 C1298.3 321.5 1308.1 322.0 1315.0 325.0 C1321.9 328.0 1328.8 335.2 1331.6 340.0 C1334.4 344.8 1331.6 351.7 1331.6 354.0" stroke="#8AA1D9" stroke-width="1.8" fill="none"/>
<path d="M1280.0 361.6 C1283.8 364.1 1296.5 369.7 1302.8 376.8 C1309.1 383.9 1312.9 396.5 1317.9 404.1 C1323.0 411.7 1328.0 417.0 1333.1 422.3 C1338.2 427.6 1342.0 432.2 1348.3 436.0 C1354.6 439.8 1364.8 442.9 1371.1 445.1 C1377.4 447.3 1383.8 448.4 1386.3 449.0" stroke="#8AA1D9" stroke-width="1.8" fill="none"/>
<path d="M1333.1 373.7 C1339.4 373.4 1362.2 372.9 1371.1 372.2 C1380.0 371.4 1380.0 367.7 1386.3 369.2 C1392.6 370.7 1401.5 377.8 1409.1 381.3 C1416.7 384.9 1424.3 386.9 1431.9 390.5 C1439.5 394.1 1446.0 397.0 1454.6 402.6 C1463.2 408.2 1478.7 420.3 1483.5 423.9" stroke="#8AA1D9" stroke-width="1.8" fill="none"/>
<path d="M1280.0 361.6 C1283.3 359.7 1294.2 354.4 1300.0 350.0 C1305.8 345.6 1309.5 339.0 1315.0 335.0 C1320.5 331.0 1330.1 327.3 1333.1 325.8" stroke="#8AA1D9" stroke-width="1.8" fill="none"/>
<path d="M1280.0 361.6 C1278.0 364.3 1271.0 371.6 1268.0 378.0 C1265.0 384.4 1263.7 392.2 1262.0 400.0 C1260.3 407.8 1259.0 416.8 1258.0 425.0 C1257.0 433.2 1256.3 445.0 1256.0 449.0" stroke="#8AA1D9" stroke-width="1.8" fill="none"/>
<path d="M1173.7 430.0 C1178.1 430.3 1191.5 432.3 1200.0 432.0 C1208.5 431.7 1215.7 429.2 1225.0 428.0 C1234.3 426.8 1250.8 425.5 1256.0 425.0" stroke="#8AA1D9" stroke-width="1.8" fill="none"/>
<path d="M1348.3 309.1 C1353.4 308.9 1368.6 307.9 1378.7 307.6 C1388.8 307.4 1399.0 309.6 1409.1 307.6 C1419.2 305.6 1429.3 298.5 1439.4 295.5 C1449.5 292.5 1462.2 290.7 1469.8 289.4 C1477.4 288.1 1482.5 288.1 1485.0 287.9" stroke="#8AA1D9" stroke-width="1.8" fill="none"/>
<text x="1017.2" y="283.1" font-size="6.8" fill="#3C4043" textLength="31.9" lengthAdjust="spacingAndGlyphs" stroke="#fff" stroke-width="1.2" paint-order="stroke" stroke-opacity="0.6">Burscough</text>
<text x="1095.4" y="285.7" font-size="6.8" fill="#3C4043" textLength="25.9" lengthAdjust="spacingAndGlyphs" stroke="#fff" stroke-width="1.2" paint-order="stroke" stroke-opacity="0.6">Standish</text>
<text x="1141.8" y="277.8" font-size="6.8" fill="#3C4043" textLength="22.8" lengthAdjust="spacingAndGlyphs" stroke="#fff" stroke-width="1.2" paint-order="stroke" stroke-opacity="0.6">Horwich</text>
<text x="1005.8" y="297.9" font-size="6.8" fill="#3C4043" textLength="26.6" lengthAdjust="spacingAndGlyphs" stroke="#fff" stroke-width="1.2" paint-order="stroke" stroke-opacity="0.6">Ormskirk</text>
<text x="999" y="312.0" font-size="6.8" fill="#3C4043" textLength="20.5" lengthAdjust="spacingAndGlyphs" stroke="#fff" stroke-width="1.2" paint-order="stroke" stroke-opacity="0.6">ughton</text>
<text x="1044.6" y="311.5" font-size="6.8" fill="#3C4043" textLength="39.4" lengthAdjust="spacingAndGlyphs" stroke="#fff" stroke-width="1.2" paint-order="stroke" stroke-opacity="0.6">Skelmersdale</text>
<text x="1112.9" y="314.6" font-size="6.8" fill="#3C4043" textLength="18.2" lengthAdjust="spacingAndGlyphs" stroke="#fff" stroke-width="1.2" paint-order="stroke" stroke-opacity="0.6">Wigan</text>
<text x="1144" y="312.0" font-size="6.8" fill="#3C4043" textLength="43.3" lengthAdjust="spacingAndGlyphs" stroke="#fff" stroke-width="1.2" paint-order="stroke" stroke-opacity="0.6">Westhoughton</text>
<text x="1194.9" y="292.7" font-size="7.4" font-weight="bold" fill="#3C4043" textLength="21.3" lengthAdjust="spacingAndGlyphs" stroke="#fff" stroke-width="1.2" paint-order="stroke" stroke-opacity="0.6">Bolton</text>
<text x="1200.2" y="313.8" font-size="6.8" fill="#3C4043" textLength="29.7" lengthAdjust="spacingAndGlyphs" stroke="#fff" stroke-width="1.2" paint-order="stroke" stroke-opacity="0.6">Farnworth</text>
<text x="1166.8" y="329.0" font-size="6.8" fill="#3C4043" textLength="25.1" lengthAdjust="spacingAndGlyphs" stroke="#fff" stroke-width="1.2" paint-order="stroke" stroke-opacity="0.6">Atherton</text>
<text x="1160" y="348.7" font-size="6.8" fill="#3C4043" textLength="16.0" lengthAdjust="spacingAndGlyphs" stroke="#fff" stroke-width="1.2" paint-order="stroke" stroke-opacity="0.6">Leigh</text>
<text x="1087" y="353.3" font-size="6.8" fill="#3C4043" textLength="61.6" lengthAdjust="spacingAndGlyphs" stroke="#fff" stroke-width="1.2" paint-order="stroke" stroke-opacity="0.6">Ashton-in-Makerfield</text>
<text x="1300.5" y="270.5" font-size="6.8" fill="#3C4043" textLength="30.4" lengthAdjust="spacingAndGlyphs" stroke="#fff" stroke-width="1.2" paint-order="stroke" stroke-opacity="0.6">Rochdale</text>
<text x="1251.9" y="281.9" font-size="6.8" fill="#3C4043" textLength="12.9" lengthAdjust="spacingAndGlyphs" stroke="#fff" stroke-width="1.2" paint-order="stroke" stroke-opacity="0.6">Bury</text>
<text x="1273.9" y="281.9" font-size="6.8" fill="#3C4043" textLength="27.3" lengthAdjust="spacingAndGlyphs" stroke="#fff" stroke-width="1.2" paint-order="stroke" stroke-opacity="0.6">Heywood</text>
<text x="1451.6" y="296.6" font-size="6.8" fill="#3C4043" textLength="28.1" lengthAdjust="spacingAndGlyphs" stroke="#fff" stroke-width="1.2" paint-order="stroke" stroke-opacity="0.6">Holmfirth</text>
<text x="1234" y="303.2" font-size="6.8" fill="#3C4043" textLength="25.5" lengthAdjust="spacingAndGlyphs" stroke="#fff" stroke-width="1.2" paint-order="stroke" stroke-opacity="0.6">Radcliffe</text>
<text x="1284.5" y="310.8" font-size="6.8" fill="#3C4043" textLength="29.6" lengthAdjust="spacingAndGlyphs" stroke="#fff" stroke-width="1.2" paint-order="stroke" stroke-opacity="0.6">Middleton</text>
<text x="1321.7" y="317.5" font-size="7.4" font-weight="bold" fill="#3C4043" textLength="24.3" lengthAdjust="spacingAndGlyphs" stroke="#fff" stroke-width="1.2" paint-order="stroke" stroke-opacity="0.6">Oldham</text>
<text x="1251.1" y="327.0" font-size="6.8" fill="#3C4043" textLength="28.9" lengthAdjust="spacingAndGlyphs" stroke="#fff" stroke-width="1.2" paint-order="stroke" stroke-opacity="0.6">Prestwich</text>
<text x="1313.4" y="353.7" font-size="6.8" fill="#3C4043" textLength="54.7" lengthAdjust="spacingAndGlyphs" stroke="#fff" stroke-width="1.2" paint-order="stroke" stroke-opacity="0.6">Ashton under Lyne</text>
<text x="1008.1" y="358.7" font-size="6.8" fill="#3C4043" textLength="18.2" lengthAdjust="spacingAndGlyphs" stroke="#fff" stroke-width="1.2" paint-order="stroke" stroke-opacity="0.6">Kirkby</text>
<text x="1065.8" y="375.4" font-size="6.8" fill="#3C4043" textLength="28.1" lengthAdjust="spacingAndGlyphs" stroke="#fff" stroke-width="1.2" paint-order="stroke" stroke-opacity="0.6">St Helens</text>
<text x="1040.8" y="394.1" font-size="6.8" fill="#3C4043" textLength="22.8" lengthAdjust="spacingAndGlyphs" stroke="#fff" stroke-width="1.2" paint-order="stroke" stroke-opacity="0.6">Prescot</text>
<text x="1033.2" y="403.2" font-size="6.8" fill="#3C4043" textLength="45.5" lengthAdjust="spacingAndGlyphs" stroke="#fff" stroke-width="1.2" paint-order="stroke" stroke-opacity="0.6">Huyton  Rainhill</text>
<text x="1116.7" y="419.3" font-size="7.4" font-weight="bold" fill="#3C4043" textLength="34.9" lengthAdjust="spacingAndGlyphs" stroke="#fff" stroke-width="1.2" paint-order="stroke" stroke-opacity="0.6">Warrington</text>
<text x="1175.2" y="426.3" font-size="6.8" fill="#3C4043" textLength="18.2" lengthAdjust="spacingAndGlyphs" stroke="#fff" stroke-width="1.2" paint-order="stroke" stroke-opacity="0.6">Lymm</text>
<text x="1221.5" y="422.8" font-size="6.8" fill="#3C4043" textLength="30.5" lengthAdjust="spacingAndGlyphs" stroke="#fff" stroke-width="1.2" paint-order="stroke" stroke-opacity="0.6">Altrincham</text>
<text x="1069.6" y="439.9" font-size="6.8" fill="#3C4043" textLength="22.0" lengthAdjust="spacingAndGlyphs" stroke="#fff" stroke-width="1.2" paint-order="stroke" stroke-opacity="0.6">Widnes</text>
<text x="1223.75" y="359.3" font-size="6.8" fill="#3C4043" textLength="18.8" lengthAdjust="spacingAndGlyphs" stroke="#fff" stroke-width="1.2" paint-order="stroke" stroke-opacity="0.6">Eccles</text>
<text x="1251.25" y="360.0" font-size="10.6" font-weight="bold" fill="#3C4043" textLength="58.8" lengthAdjust="spacingAndGlyphs" stroke="#fff" stroke-width="1.2" paint-order="stroke" stroke-opacity="0.6">Manchester</text>
<text x="1337.7" y="377.7" font-size="6.8" fill="#3C4043" textLength="15.2" lengthAdjust="spacingAndGlyphs" stroke="#fff" stroke-width="1.2" paint-order="stroke" stroke-opacity="0.6">Hyde</text>
<text x="1240.6" y="381.9" font-size="6.8" fill="#3C4043" textLength="26.3" lengthAdjust="spacingAndGlyphs" stroke="#fff" stroke-width="1.2" paint-order="stroke" stroke-opacity="0.6">Stretford</text>
<text x="1387.8" y="384.0" font-size="6.8" fill="#3C4043" textLength="24.3" lengthAdjust="spacingAndGlyphs" stroke="#fff" stroke-width="1.2" paint-order="stroke" stroke-opacity="0.6">Glossop</text>
<text x="1299.7" y="406.7" font-size="7.4" font-weight="bold" fill="#3C4043" textLength="31.2" lengthAdjust="spacingAndGlyphs" stroke="#fff" stroke-width="1.2" paint-order="stroke" stroke-opacity="0.6">Stockport</text>
<text x="1343.8" y="415.6" font-size="6.8" fill="#3C4043" textLength="20.5" lengthAdjust="spacingAndGlyphs" stroke="#fff" stroke-width="1.2" paint-order="stroke" stroke-opacity="0.6">Marple</text>
<text x="1280" y="417.5" font-size="6.8" fill="#3C4043" textLength="24.3" lengthAdjust="spacingAndGlyphs" stroke="#fff" stroke-width="1.2" paint-order="stroke" stroke-opacity="0.6">Cheadle</text>
<rect x="1135.7" y="262.8" width="12.9" height="6.1" rx="1" fill="#6A74D8" stroke="#fff" stroke-width="0.6"/>
<text x="1142.2" y="267.3" font-size="5" font-weight="bold" fill="#fff" text-anchor="middle">M61</text>
<rect x="1204.8" y="295.5" width="13.7" height="6.0" rx="1" fill="#6F9E3A" stroke="#fff" stroke-width="0.6"/>
<text x="1211.7" y="299.9" font-size="5" font-weight="bold" fill="#F6E94A" text-anchor="middle">A666</text>
<rect x="1160.8" y="334.5" width="13.6" height="6.1" rx="1" fill="#6F9E3A" stroke="#fff" stroke-width="0.6"/>
<text x="1167.6" y="339.0" font-size="5" font-weight="bold" fill="#F6E94A" text-anchor="middle">A579</text>
<rect x="1059.8" y="314.9" width="12.1" height="6.1" rx="1" fill="#6A74D8" stroke="#fff" stroke-width="0.6"/>
<text x="1065.8" y="319.4" font-size="5" font-weight="bold" fill="#fff" text-anchor="middle">M58</text>
<rect x="1015.7" y="325.1" width="12.2" height="6.0" rx="1" fill="#6A74D8" stroke="#fff" stroke-width="0.6"/>
<text x="1021.8" y="329.5" font-size="5" font-weight="bold" fill="#fff" text-anchor="middle">M58</text>
<rect x="1090.9" y="315.5" width="9.9" height="6.1" rx="1" fill="#6A74D8" stroke="#fff" stroke-width="0.6"/>
<text x="1095.8" y="320.0" font-size="5" font-weight="bold" fill="#fff" text-anchor="middle">M6</text>
<rect x="999" y="270.4" width="9.9" height="6.1" rx="1" fill="#6F9E3A" stroke="#fff" stroke-width="0.6"/>
<text x="1004.0" y="274.9" font-size="5" font-weight="bold" fill="#F6E94A" text-anchor="middle">A570</text>
<rect x="1260.2" y="265.4" width="12.9" height="6.5" rx="1" fill="#6A74D8" stroke="#fff" stroke-width="0.6"/>
<text x="1266.7" y="270.3" font-size="5" font-weight="bold" fill="#fff" text-anchor="middle">M66</text>
<rect x="1323.3" y="273.4" width="12.1" height="6.1" rx="1" fill="#6A74D8" stroke="#fff" stroke-width="0.6"/>
<text x="1329.3" y="277.9" font-size="5" font-weight="bold" fill="#fff" text-anchor="middle">M62</text>
<rect x="1416.7" y="260.5" width="11.4" height="5.3" rx="1" fill="#6F9E3A" stroke="#fff" stroke-width="0.6"/>
<text x="1422.4" y="264.2" font-size="5" font-weight="bold" fill="#F6E94A" text-anchor="middle">A62</text>
<rect x="1253.4" y="288.9" width="11.4" height="6.1" rx="1" fill="#6F9E3A" stroke="#fff" stroke-width="0.6"/>
<text x="1259.1" y="293.4" font-size="5" font-weight="bold" fill="#F6E94A" text-anchor="middle">A56</text>
<rect x="1304.3" y="293.6" width="22.0" height="6.1" rx="1" fill="#6A74D8" stroke="#fff" stroke-width="0.6"/>
<text x="1315.3" y="298.1" font-size="5" font-weight="bold" fill="#fff" text-anchor="middle">A627(M)</text>
<rect x="1341.5" y="297.4" width="13.7" height="6.1" rx="1" fill="#6F9E3A" stroke="#fff" stroke-width="0.6"/>
<text x="1348.3" y="301.9" font-size="5" font-weight="bold" fill="#F6E94A" text-anchor="middle">A672</text>
<rect x="1264" y="329.9" width="11.4" height="6.1" rx="1" fill="#6F9E3A" stroke="#fff" stroke-width="0.6"/>
<text x="1269.7" y="334.4" font-size="5" font-weight="bold" fill="#F6E94A" text-anchor="middle">A56</text>
<rect x="1241.9" y="338" width="10.6" height="5.8" rx="1" fill="#6F9E3A" stroke="#fff" stroke-width="0.6"/>
<text x="1247.2" y="342.2" font-size="5" font-weight="bold" fill="#F6E94A" text-anchor="middle">A580</text>
<rect x="1296" y="338.7" width="9.0" height="5.7" rx="1" fill="#6F9E3A" stroke="#fff" stroke-width="0.6"/>
<text x="1300.5" y="342.8" font-size="5" font-weight="bold" fill="#F6E94A" text-anchor="middle">A6</text>
<rect x="1419" y="346.3" width="13.6" height="6.1" rx="1" fill="#6F9E3A" stroke="#fff" stroke-width="0.6"/>
<text x="1425.8" y="350.8" font-size="5" font-weight="bold" fill="#F6E94A" text-anchor="middle">A628</text>
<rect x="1473.6" y="338.7" width="10.4" height="6.1" rx="1" fill="#6F9E3A" stroke="#fff" stroke-width="0.6"/>
<text x="1478.8" y="343.2" font-size="5" font-weight="bold" fill="#F6E94A" text-anchor="middle">A62</text>
<rect x="1022.5" y="375.3" width="13.0" height="6.0" rx="1" fill="#6A74D8" stroke="#fff" stroke-width="0.6"/>
<text x="1029.0" y="379.7" font-size="5" font-weight="bold" fill="#fff" text-anchor="middle">M57</text>
<rect x="1097" y="399.6" width="12.1" height="6.0" rx="1" fill="#6A74D8" stroke="#fff" stroke-width="0.6"/>
<text x="1103.0" y="404.0" font-size="5" font-weight="bold" fill="#fff" text-anchor="middle">M62</text>
<rect x="1027.9" y="407.2" width="12.9" height="6.0" rx="1" fill="#6A74D8" stroke="#fff" stroke-width="0.6"/>
<text x="1034.3" y="411.6" font-size="5" font-weight="bold" fill="#fff" text-anchor="middle">M62</text>
<rect x="1182" y="382.1" width="12.2" height="6.1" rx="1" fill="#6A74D8" stroke="#fff" stroke-width="0.6"/>
<text x="1188.1" y="386.6" font-size="5" font-weight="bold" fill="#fff" text-anchor="middle">M62</text>
<rect x="1180.5" y="404.1" width="11.4" height="6.1" rx="1" fill="#6F9E3A" stroke="#fff" stroke-width="0.6"/>
<text x="1186.2" y="408.6" font-size="5" font-weight="bold" fill="#F6E94A" text-anchor="middle">A57</text>
<rect x="1080.3" y="416.3" width="14.4" height="6.0" rx="1" fill="#6F9E3A" stroke="#fff" stroke-width="0.6"/>
<text x="1087.5" y="420.7" font-size="5" font-weight="bold" fill="#F6E94A" text-anchor="middle">A557</text>
<rect x="1049.1" y="428.4" width="16.7" height="6.1" rx="1" fill="#6F9E3A" stroke="#fff" stroke-width="0.6"/>
<text x="1057.4" y="432.9" font-size="5" font-weight="bold" fill="#F6E94A" text-anchor="middle">A5300</text>
<rect x="1167.6" y="436" width="9.9" height="6.1" rx="1" fill="#6A74D8" stroke="#fff" stroke-width="0.6"/>
<text x="1172.5" y="440.5" font-size="5" font-weight="bold" fill="#fff" text-anchor="middle">M6</text>
<rect x="1118.2" y="445.1" width="10.7" height="5.9" rx="1" fill="#6F9E3A" stroke="#fff" stroke-width="0.6"/>
<text x="1123.6" y="449.4" font-size="5" font-weight="bold" fill="#F6E94A" text-anchor="middle">A56</text>
<rect x="999" y="429" width="7.6" height="5.5" rx="1" fill="#6F9E3A" stroke="#fff" stroke-width="0.6"/>
<text x="1002.8" y="432.9" font-size="5" font-weight="bold" fill="#F6E94A" text-anchor="middle">A561</text>
<rect x="1318.7" y="359.3" width="12.2" height="6.1" rx="1" fill="#6A74D8" stroke="#fff" stroke-width="0.6"/>
<text x="1324.8" y="363.8" font-size="5" font-weight="bold" fill="#fff" text-anchor="middle">M60</text>
<rect x="1294.4" y="370.4" width="8.4" height="6.1" rx="1" fill="#6F9E3A" stroke="#fff" stroke-width="0.6"/>
<text x="1298.6" y="374.9" font-size="5" font-weight="bold" fill="#F6E94A" text-anchor="middle">A6</text>
<rect x="1271.6" y="381.3" width="16.7" height="5.8" rx="1" fill="#6F9E3A" stroke="#fff" stroke-width="0.6"/>
<text x="1279.9" y="385.5" font-size="5" font-weight="bold" fill="#F6E94A" text-anchor="middle">A5103</text>
<rect x="1248.8" y="386.7" width="12.2" height="6.0" rx="1" fill="#6A74D8" stroke="#fff" stroke-width="0.6"/>
<text x="1254.9" y="391.1" font-size="5" font-weight="bold" fill="#fff" text-anchor="middle">M60</text>
<rect x="1436.4" y="387.4" width="10.6" height="6.1" rx="1" fill="#6F9E3A" stroke="#fff" stroke-width="0.6"/>
<text x="1441.7" y="391.9" font-size="5" font-weight="bold" fill="#F6E94A" text-anchor="middle">A57</text>
<rect x="1256.4" y="425.4" width="12.2" height="6.4" rx="1" fill="#6A74D8" stroke="#fff" stroke-width="0.6"/>
<text x="1262.5" y="430.2" font-size="5" font-weight="bold" fill="#fff" text-anchor="middle">M56</text>
<rect x="1374.1" y="436.8" width="8.4" height="6.8" rx="1" fill="#6F9E3A" stroke="#fff" stroke-width="0.6"/>
<text x="1378.3" y="442.0" font-size="5" font-weight="bold" fill="#F6E94A" text-anchor="middle">A6</text>
<path d="M1163.7 311.5 C1160.7 303.5 1152.5 294.5 1152.5 286.5 A11.2 11.2 0 1 1 1174.9 286.5 C1174.9 294.5 1166.7 303.5 1163.7 311.5 Z" fill="#B71C1C"/>
<circle cx="1163.7" cy="286.5" r="6.4" fill="#fff"/>
<g fill="none" stroke="#B71C1C" stroke-width="1"><rect x="1159.7" y="283.7" width="5.6" height="4.4" rx=".6"/><path d="M1165.3 285.3 H1166.7 L1167.9 286.9 V288.1 H1165.3"/><circle cx="1161.3" cy="288.7" r=".9"/><circle cx="1166.3" cy="288.7" r=".9"/></g>
<path d="M1071.9 376.6 C1068.9 368.6 1060.7 359.6 1060.7 351.6 A11.2 11.2 0 1 1 1083.1000000000001 351.6 C1083.1000000000001 359.6 1074.9 368.6 1071.9 376.6 Z" fill="#B71C1C"/>
<circle cx="1071.9" cy="351.6" r="6.4" fill="#fff"/>
<g fill="none" stroke="#B71C1C" stroke-width="1"><rect x="1067.9" y="348.8" width="5.6" height="4.4" rx=".6"/><path d="M1073.5 350.40000000000003 H1074.9 L1076.1000000000001 352.0 V353.20000000000005 H1073.5"/><circle cx="1069.5" cy="353.8" r=".9"/><circle cx="1074.5" cy="353.8" r=".9"/></g>
<path d="M1166.25 390.6 C1163.25 382.6 1155.05 373.6 1155.05 365.6 A11.2 11.2 0 1 1 1177.45 365.6 C1177.45 373.6 1169.25 382.6 1166.25 390.6 Z" fill="#B71C1C"/>
<circle cx="1166.25" cy="365.6" r="6.4" fill="#fff"/>
<g fill="none" stroke="#B71C1C" stroke-width="1"><rect x="1162.25" y="362.8" width="5.6" height="4.4" rx=".6"/><path d="M1167.85 364.40000000000003 H1169.25 L1170.45 366.0 V367.20000000000005 H1167.85"/><circle cx="1163.85" cy="367.8" r=".9"/><circle cx="1168.85" cy="367.8" r=".9"/></g>
<path d="M1206.25 383.75 C1203.25 375.75 1195.05 366.75 1195.05 358.75 A11.2 11.2 0 1 1 1217.45 358.75 C1217.45 366.75 1209.25 375.75 1206.25 383.75 Z" fill="#B71C1C"/>
<circle cx="1206.25" cy="358.75" r="6.4" fill="#fff"/>
<g fill="none" stroke="#B71C1C" stroke-width="1"><rect x="1202.25" y="355.95" width="5.6" height="4.4" rx=".6"/><path d="M1207.85 357.55 H1209.25 L1210.45 359.15 V360.35 H1207.85"/><circle cx="1203.85" cy="360.95" r=".9"/><circle cx="1208.85" cy="360.95" r=".9"/></g>
<path d="M1231.25 360.6 C1228.25 352.6 1220.05 343.6 1220.05 335.6 A11.2 11.2 0 1 1 1242.45 335.6 C1242.45 343.6 1234.25 352.6 1231.25 360.6 Z" fill="#16774A"/>
<circle cx="1231.25" cy="335.6" r="6.4" fill="#fff"/>
<g fill="none" stroke="#16774A" stroke-width="1"><rect x="1227.25" y="332.8" width="5.6" height="4.4" rx=".6"/><path d="M1232.85 334.40000000000003 H1234.25 L1235.45 336.0 V337.20000000000005 H1232.85"/><circle cx="1228.85" cy="337.8" r=".9"/><circle cx="1233.85" cy="337.8" r=".9"/></g>
<path d="M1312.25 356.5 C1309.25 348.5 1301.05 339.5 1301.05 331.5 A11.2 11.2 0 1 1 1323.45 331.5 C1323.45 339.5 1315.25 348.5 1312.25 356.5 Z" fill="#B71C1C"/>
<circle cx="1312.25" cy="331.5" r="6.4" fill="#fff"/>
<g fill="none" stroke="#B71C1C" stroke-width="1"><rect x="1308.25" y="328.7" width="5.6" height="4.4" rx=".6"/><path d="M1313.85 330.3 H1315.25 L1316.45 331.9 V333.1 H1313.85"/><circle cx="1309.85" cy="333.7" r=".9"/><circle cx="1314.85" cy="333.7" r=".9"/></g>
<path d="M1156.4 451.3 C1153.4 443.3 1145.2 434.3 1145.2 426.3 A11.2 11.2 0 1 1 1167.6000000000001 426.3 C1167.6000000000001 434.3 1159.4 443.3 1156.4 451.3 Z" fill="#16774A"/>
<circle cx="1156.4" cy="426.3" r="6.4" fill="#fff"/>
<g fill="none" stroke="#16774A" stroke-width="1"><rect x="1152.4" y="423.5" width="5.6" height="4.4" rx=".6"/><path d="M1158.0 425.1 H1159.4 L1160.6000000000001 426.7 V427.90000000000003 H1158.0"/><circle cx="1154.0" cy="428.5" r=".9"/><circle cx="1159.0" cy="428.5" r=".9"/></g>
</svg>
</body></html>
